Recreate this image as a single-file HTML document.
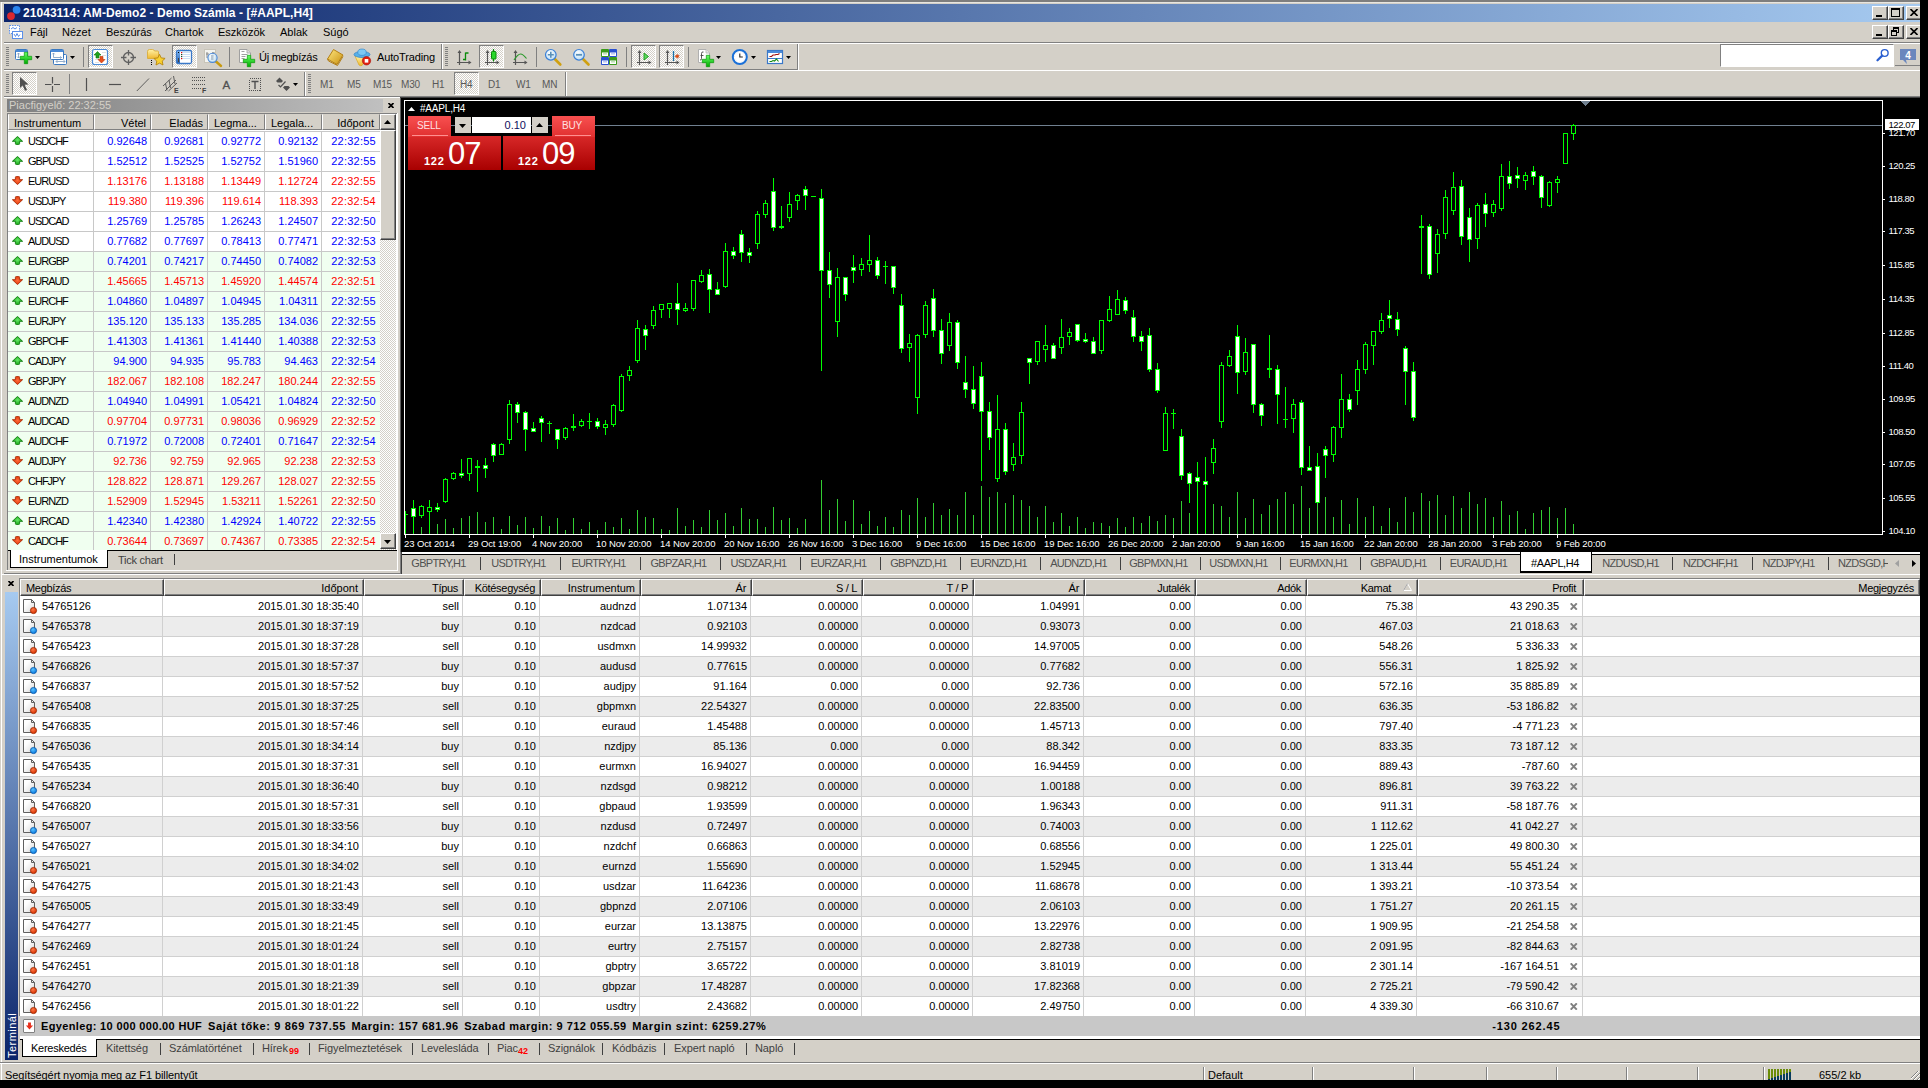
<!DOCTYPE html><html><head><meta charset="utf-8"><title>21043114: AM-Demo2 - Demo Számla - [#AAPL,H4]</title><style>
*{box-sizing:border-box}
html,body{margin:0;padding:0}
body{background:#000;width:1928px;height:1088px;overflow:hidden;position:relative;font:11px "Liberation Sans","DejaVu Sans",sans-serif;color:#000}
#win{position:absolute;left:0;top:0;width:1920px;height:1080px;background:#D4D0C8;overflow:hidden}
.a{position:absolute}
.t{position:absolute;white-space:nowrap;line-height:14px;height:14px}
.r{text-align:right}
.btn{position:absolute;background:#D4D0C8;border:1px solid;border-color:#fff #404040 #404040 #fff;box-shadow:inset -1px -1px 0 #808080}
.sunk{position:absolute;border:1px solid;border-color:#808080 #fff #fff #808080}
.dith{position:absolute;background:repeating-conic-gradient(#fff 0% 25%,#D4D0C8 0% 50%) 0 0/2px 2px;border:1px solid;border-color:#808080 #fff #fff #808080}
.hd{position:absolute;top:0;height:17px;background:#D4D0C8;border:1px solid;border-color:#fff #404040 #404040 #fff;box-shadow:inset -1px -1px 0 #808080;line-height:16px;padding:0 5px;white-space:nowrap;overflow:hidden;letter-spacing:-0.3px}
.hd2{position:absolute;top:0;height:16px;background:#D4D0C8;border:1px solid;border-color:#D4D0C8 #808080 #808080 #fff;line-height:16px;padding:0 4px 0 5px;white-space:nowrap;overflow:hidden}
.sep{position:absolute;width:1px;background:#808080}
.sep2{position:absolute;width:2px;border-left:1px solid #808080;border-right:1px solid #fff}
.grip{position:absolute;width:3px;background:repeating-linear-gradient(#808080 0,#808080 1px,#D4D0C8 1px,#D4D0C8 2px)}
</style></head><body><div id="win">
<div class="a" style="left:0;top:0;width:1920px;height:2px;background:#7e7e7e"></div>
<div class="a" style="left:1px;top:2px;width:1px;height:1078px;background:#fff"></div>
<div class="a" style="left:2px;top:2px;width:1918px;height:1px;background:#e8e6e0"></div>
<div class="a" style="left:4px;top:4px;width:1916px;height:18px;background:linear-gradient(90deg,#0A246A 0%,#A6CAF0 100%)"></div>
<svg class="a" style="left:5px;top:5px" width="17" height="16" viewBox="0 0 17 16"><circle cx="11.6" cy="4.8" r="3.9" fill="#2a85ee"/><circle cx="6" cy="11.1" r="3.9" fill="#d9282f"/></svg>
<div class="t" id="title" style="left:23px;top:5px;height:16px;line-height:16px;font-size:12px;font-weight:bold;color:#fff;letter-spacing:0.05px">21043114: AM-Demo2 - Demo Számla - [#AAPL,H4]</div>
<div class="btn" style="left:1872px;top:6px;width:16px;height:14px"></div>
<div class="a" style="left:1876px;top:15px;width:6px;height:2px;background:#000"></div>
<div class="btn" style="left:1888px;top:6px;width:16px;height:14px"></div>
<div class="a" style="left:1891px;top:8px;width:9px;height:9px;border:1px solid #000;border-top-width:2px"></div>
<div class="btn" style="left:1906px;top:6px;width:16px;height:14px"></div>
<svg class="a" style="left:1910px;top:9px" width="8" height="7" viewBox="0 0 8 7"><path d="M0.5 0L7.5 7M7.5 0L0.5 7" stroke="#000" stroke-width="1.6" fill="none"/></svg>
<div class="btn" style="left:1872px;top:25px;width:16px;height:14px"></div>
<div class="a" style="left:1876px;top:34px;width:6px;height:2px;background:#000"></div>
<div class="btn" style="left:1888px;top:25px;width:16px;height:14px"></div>
<div class="a" style="left:1893px;top:27px;width:6px;height:6px;border:1px solid #000;border-top-width:2px"></div>
<div class="a" style="left:1891px;top:30px;width:6px;height:6px;border:1px solid #000;border-top-width:2px;background:#D4D0C8"></div>
<div class="btn" style="left:1906px;top:25px;width:16px;height:14px"></div>
<svg class="a" style="left:1910px;top:28px" width="8" height="7" viewBox="0 0 8 7"><path d="M0.5 0L7.5 7M7.5 0L0.5 7" stroke="#000" stroke-width="1.6" fill="none"/></svg>
<svg class="a" style="left:8px;top:24px" width="16" height="16" viewBox="0 0 16 16"><rect x="1.5" y="1.5" width="10" height="8" fill="#fff" stroke="#5b8fe8" stroke-dasharray="1.5 1"/><path d="M3 5l2-1.5 2 1.5 2-1.5" stroke="#5b8fe8" fill="none"/><rect x="4.5" y="7.5" width="10" height="7" fill="#fff" stroke="#5b8fe8"/><path d="M6 10l1.5 2.5 1.5-3 1.5 3 1.5-2" stroke="#5b8fe8" fill="none"/></svg>
<div class="t" style="left:30px;top:25px">Fájl</div>
<div class="t" style="left:62px;top:25px">Nézet</div>
<div class="t" style="left:106px;top:25px">Beszúrás</div>
<div class="t" style="left:165px;top:25px">Chartok</div>
<div class="t" style="left:218px;top:25px">Eszközök</div>
<div class="t" style="left:280px;top:25px">Ablak</div>
<div class="t" style="left:323px;top:25px">Súgó</div>
<div class="a" style="left:4px;top:42px;width:1916px;height:1px;background:#808080"></div>
<div class="a" style="left:4px;top:43px;width:1916px;height:1px;background:#fff"></div>
<div class="a" style="left:4px;top:69px;width:794px;height:1px;background:#808080"></div>
<div class="a" style="left:4px;top:70px;width:1916px;height:1px;background:#fff"></div>
<div class="a" style="left:797px;top:44px;width:1px;height:26px;background:#808080"></div>
<div class="a" style="left:798px;top:44px;width:1px;height:27px;background:#fff"></div>
<div class="sep2" style="left:441px;top:44px;height:25px"></div>
<div class="a" style="left:4px;top:96px;width:1916px;height:1px;background:#808080"></div>
<div class="a" style="left:4px;top:97px;width:396px;height:1px;background:#fff"></div>
<div class="a" style="left:400px;top:97px;width:1520px;height:1px;background:#404040"></div>
<div class="sep2" style="left:304px;top:72px;height:24px"></div>
<div class="sep2" style="left:565px;top:72px;height:24px"></div>
<div class="grip" style="left:6px;top:47px;height:20px"></div>
<div class="grip" style="left:445px;top:47px;height:20px"></div>
<div class="grip" style="left:6px;top:74px;height:20px"></div>
<div class="grip" style="left:308px;top:74px;height:20px"></div>
<div class="sep" style="left:83px;top:47px;height:20px"></div>
<div class="sep" style="left:229px;top:47px;height:20px"></div>
<div class="sep" style="left:536px;top:47px;height:20px"></div>
<div class="sep" style="left:626px;top:47px;height:20px"></div>
<div class="sep" style="left:688px;top:47px;height:20px"></div>
<div class="sep" style="left:69px;top:74px;height:20px"></div>
<div class="dith" style="left:88px;top:45px;width:25px;height:23px"></div>
<div class="dith" style="left:172px;top:45px;width:25px;height:23px"></div>
<div class="dith" style="left:479px;top:45px;width:25px;height:23px"></div>
<div class="dith" style="left:631px;top:45px;width:25px;height:23px"></div>
<div class="dith" style="left:659px;top:45px;width:25px;height:23px"></div>
<div class="dith" style="left:12px;top:72px;width:25px;height:23px"></div>
<div class="dith" style="left:454px;top:72px;width:25px;height:23px"></div>
<svg class="a" style="left:35px;top:56px" width="5" height="3" viewBox="0 0 5 3"><path d="M0 0h5L2.5 3z" fill="#000"/></svg>
<svg class="a" style="left:70px;top:56px" width="5" height="3" viewBox="0 0 5 3"><path d="M0 0h5L2.5 3z" fill="#000"/></svg>
<svg class="a" style="left:716px;top:56px" width="5" height="3" viewBox="0 0 5 3"><path d="M0 0h5L2.5 3z" fill="#000"/></svg>
<svg class="a" style="left:751px;top:56px" width="5" height="3" viewBox="0 0 5 3"><path d="M0 0h5L2.5 3z" fill="#000"/></svg>
<svg class="a" style="left:786px;top:56px" width="5" height="3" viewBox="0 0 5 3"><path d="M0 0h5L2.5 3z" fill="#000"/></svg>
<svg class="a" style="left:293px;top:83px" width="5" height="3" viewBox="0 0 5 3"><path d="M0 0h5L2.5 3z" fill="#000"/></svg>
<div class="t" style="left:259px;top:50px;letter-spacing:-0.25px">Új megbízás</div>
<div class="t" style="left:377px;top:50px;letter-spacing:-0.15px">AutoTrading</div>
<div class="t" style="left:320px;top:78px;color:#585858;font-size:10px;letter-spacing:-0.2px">M1</div>
<div class="t" style="left:347px;top:78px;color:#585858;font-size:10px;letter-spacing:-0.2px">M5</div>
<div class="t" style="left:373px;top:78px;color:#585858;font-size:10px;letter-spacing:-0.2px">M15</div>
<div class="t" style="left:401px;top:78px;color:#585858;font-size:10px;letter-spacing:-0.2px">M30</div>
<div class="t" style="left:432px;top:78px;color:#585858;font-size:10px;letter-spacing:-0.2px">H1</div>
<div class="t" style="left:460px;top:78px;color:#585858;font-size:10px;letter-spacing:-0.2px">H4</div>
<div class="t" style="left:488px;top:78px;color:#585858;font-size:10px;letter-spacing:-0.2px">D1</div>
<div class="t" style="left:516px;top:78px;color:#585858;font-size:10px;letter-spacing:-0.2px">W1</div>
<div class="t" style="left:542px;top:78px;color:#585858;font-size:10px;letter-spacing:-0.2px">MN</div>
<div class="a" style="left:1720px;top:44px;width:174px;height:23px;background:#fff;border:1px solid;border-color:#808080 #fff #fff #808080"></div>
<svg class="a" style="left:1876px;top:48px" width="14" height="14" viewBox="0 0 14 14"><circle cx="8.7" cy="5" r="3.4" fill="#fff" stroke="#2a5fd0" stroke-width="1.4"/><path d="M6.2 7.6L1.5 12.3" stroke="#2a5fd0" stroke-width="2.2" stroke-linecap="round"/></svg>
<div class="a" style="left:1895px;top:45px;width:25px;height:21px;border-bottom:1px solid #808080"></div>
<svg class="a" style="left:1899px;top:48px" width="18" height="17" viewBox="0 0 18 17"><path d="M1 1h16v11H7l1 4-4-4H1z" fill="#6a86bd"/><text x="9" y="10.5" font-family="Liberation Sans,sans-serif" font-size="10" font-weight="bold" fill="#fff" text-anchor="middle">4</text></svg>
<svg class="a" style="left:0;top:43px" width="800" height="55" viewBox="0 43 800 55"><defs><linearGradient id="gpl" x1="0" y1="0" x2="0" y2="1"><stop offset="0" stop-color="#6f6"/><stop offset="1" stop-color="#0a0"/></linearGradient><linearGradient id="gbl" x1="0" y1="0" x2="0" y2="1"><stop offset="0" stop-color="#7ab0ea"/><stop offset="1" stop-color="#2a66b8"/></linearGradient><linearGradient id="gyl" x1="0" y1="0" x2="0" y2="1"><stop offset="0" stop-color="#fff2a8"/><stop offset="1" stop-color="#f0b830"/></linearGradient><linearGradient id="ggd" x1="0" y1="0" x2="1" y2="1"><stop offset="0" stop-color="#ffe880"/><stop offset="1" stop-color="#c89010"/></linearGradient><radialGradient id="glens" cx="0.4" cy="0.35" r="0.7"><stop offset="0" stop-color="#fff"/><stop offset="1" stop-color="#b8dcf4"/></radialGradient></defs><rect x="15.5" y="49.5" width="12" height="10" rx="1" fill="#fff" stroke="#3a78c0"/><rect x="16" y="50" width="11" height="2" fill="#4a8ad8"/><path d="M18.5 53v5M17 54.5l1.5-1.5 1.5 1.5M17 56.5l1.5 1.5 1.5-1.5" stroke="#7a9ac0" fill="none" stroke-width="0.8"/><path d="M24.3 52.3h3.4v4h4v3.400h-4v4h-3.400v-4h-4v-3.400h4z" fill="url(#gpl)" stroke="#0a9a0a" stroke-width="0.7"/><rect x="53.5" y="54.5" width="13" height="10" rx="1" fill="#fff" stroke="#3a78c0"/><path d="M56 61.5h9M56 61.5l1.5-1.5M56 61.5l1.5 1.5M65 61.5l-1.5-1.5M65 61.5l-1.5 1.5" stroke="#7a9ac0" fill="none" stroke-width="0.8"/><rect x="50.5" y="49.5" width="13" height="10" rx="1" fill="#fff" stroke="#3a78c0"/><rect x="51" y="50" width="12" height="2" fill="#4a8ad8"/><path d="M53.5 53v4.5h8M52.3 54.3l1.2-1.3 1.2 1.3M60.3 56.3l1.2 1.2-1.2 1.2" stroke="#7a9ac0" fill="none" stroke-width="0.8"/><rect x="92.5" y="49.5" width="15" height="15" rx="2" fill="#fff" stroke="#4a8ad8" stroke-width="1.2"/><path d="M102 52.5h4M102 55.5h4M95 59.5h4M95 62.5h4" stroke="#d8d8d8" stroke-width="0.8"/><path d="M97.5 51.5l3.5 3.5h-2v3h-3v-3h-2z" fill="#1fa01f" stroke="#0c7a0c" stroke-width="0.6"/><path d="M101.500 63l3.500-3.500h-2v-3h-3v3h-2z" fill="#e8501c" stroke="#b83208" stroke-width="0.6"/><circle cx="128.500" cy="57.500" r="5" fill="none" stroke="#606060" stroke-width="1.3"/><path d="M128.500 50v5.500M128.500 59.500v5.500M121 57.500h5.500M130.500 57.500h5.500" stroke="#606060" stroke-width="1.3"/><path d="M147.500 51.500q0-2 2-2h3q1.500 0 2 1.500h3q1 0 1 1v6.500h-11z" fill="url(#gyl)" stroke="#d8a830" stroke-width="0.8"/><path d="M151.500 60v5.500" stroke="#000" stroke-dasharray="1 1"/><path d="M159.500 54.300l1.700 3.600 3.900 0.500-2.900 2.700 0.800 3.900-3.500-1.900-3.500 1.900 0.800-3.900-2.900-2.700 3.900-0.500z" fill="#f8d030" stroke="#b8860b" stroke-width="0.9"/><rect x="176.500" y="50.500" width="15" height="13" rx="1.500" fill="#fff" stroke="#3a78c8" stroke-width="1.300"/><rect x="177" y="51" width="3" height="12" fill="url(#gbl)"/><rect x="178" y="58" width="1" height="4" fill="#444"/><path d="M181 52.500h9M181 54.500h9M181 56.500h9M181 58.500h9" stroke="#b8d0f0" stroke-width="0.7"/><rect x="178" y="52" width="1" height="1" fill="#000"/><rect x="181" y="52" width="1.200" height="1.200" fill="#e00"/><rect x="181" y="54" width="1.200" height="1.200" fill="#242"/><rect x="181" y="56" width="1.200" height="1.200" fill="#242"/><rect x="181" y="58" width="1.200" height="1.200" fill="#e00"/><rect x="204.500" y="49.500" width="11" height="13" fill="#f4f4f0" stroke="#c8c4b8"/><path d="M207 52v6M213 52v5M206 54h3M212 53h3" stroke="#808080" stroke-width="0.9"/><path d="M216 61.500l5 4.500" stroke="#c89a10" stroke-width="2.400" stroke-linecap="round"/><circle cx="212.500" cy="57.800" r="4.600" fill="url(#glens)" fill-opacity="0.850" stroke="#4a88d8" stroke-width="1.100"/><rect x="211" y="55" width="2.500" height="5" fill="#a8b8c8" opacity="0.8"/><path d="M239.500 49.500h7.500l3.500 3.500v9.500h-11z" fill="#fff" stroke="#a0a0a0"/><path d="M247 49.500v3.500h3.500" fill="#e0e0e0" stroke="#a0a0a0" stroke-width="0.8"/><path d="M241.500 51.500h3M241.500 54.500h6M241.500 56.500h4M241.500 58.500h3" stroke="#a0a0a0"/><path d="M247.3 55.3h3.4v4h4v3.400h-4v4h-3.400v-4h-4v-3.400h4z" fill="url(#gpl)" stroke="#0a9a0a" stroke-width="0.7"/><path d="M327.500 59l6-9.500 9.500 5.500-6 9.500z" fill="url(#ggd)" stroke="#b07808" stroke-width="0.9"/><path d="M327.500 59l1 2 9 4.500 5.500-9" fill="none" stroke="#b07808" stroke-width="0.9"/><path d="M355 56l10 0 1 4-4 5.500q-2 0.500-3-0.500z" fill="url(#gyl)" stroke="#d8a820" stroke-width="0.700"/><ellipse cx="362" cy="54.500" rx="8" ry="3" fill="#58b0e8" stroke="#2a80c8" stroke-width="0.700"/><ellipse cx="362" cy="52.200" rx="4.200" ry="3.200" fill="#7cc8f4" stroke="#2a80c8" stroke-width="0.600"/><circle cx="366.500" cy="60.800" r="4.200" fill="#e02010" stroke="#a81008" stroke-width="0.600"/><rect x="364.700" y="59" width="3.600" height="3.600" fill="#fff"/><path d="M459.5 52V65 M457 62.5H470" stroke="#555" stroke-width="1.2" fill="none"/><path d="M459.5 50l2 3h-4z M471.5 62.5l-3 -2v4z" fill="#555"/><path d="M465.500 52.500v8M465.500 53h3M465.500 59.500h-2.500" stroke="#0a8a0a" stroke-width="1.300" fill="none"/><path d="M487.5 52V65 M485 62.5H498" stroke="#555" stroke-width="1.2" fill="none"/><path d="M487.5 50l2 3h-4z M499.5 62.5l-3 -2v4z" fill="#555"/><path d="M493.500 49v12.500" stroke="#0a8a0a" stroke-width="1.200"/><rect x="491.500" y="51.500" width="4.500" height="7.500" rx="0.800" fill="#2ad82a" stroke="#0a8a0a"/><path d="M515.5 52V65 M513 62.5H526" stroke="#555" stroke-width="1.2" fill="none"/><path d="M515.5 50l2 3h-4z M527.5 62.5l-3 -2v4z" fill="#555"/><path d="M514 60q4-6 6.500-6t6 4.500" stroke="#2a9a2a" stroke-width="1.200" fill="none"/><path d="M554.8 59l5.500 5.500" stroke="#d0a010" stroke-width="2.600" stroke-linecap="round"/><circle cx="550.8" cy="54.800" r="5.300" fill="url(#glens)" stroke="#3a80d8" stroke-width="1.200"/><path d="M547.8 54.800h6M550.8 51.800v6" stroke="#5a90b8" stroke-width="1.600"/><path d="M583 59l5.500 5.500" stroke="#d0a010" stroke-width="2.600" stroke-linecap="round"/><circle cx="579" cy="54.800" r="5.300" fill="url(#glens)" stroke="#3a80d8" stroke-width="1.200"/><path d="M576 54.800h6" stroke="#5a90b8" stroke-width="1.800"/><rect x="601" y="49" width="8" height="8" rx="1" fill="#3a9a1a"/><rect x="602" y="52.5" width="6" height="3.500" fill="#fff"/><rect x="603" y="53.5" width="4" height="0.800" fill="#3a9a1a" opacity="0.6"/><rect x="609" y="49" width="8" height="8" rx="1" fill="#2a50d0"/><rect x="610" y="52.5" width="6" height="3.500" fill="#fff"/><rect x="611" y="53.5" width="4" height="0.800" fill="#2a50d0" opacity="0.6"/><rect x="601" y="57" width="8" height="8" rx="1" fill="#2a50d0"/><rect x="602" y="60.5" width="6" height="3.500" fill="#fff"/><rect x="603" y="61.5" width="4" height="0.800" fill="#2a50d0" opacity="0.6"/><rect x="609" y="57" width="8" height="8" rx="1" fill="#3a9a1a"/><rect x="610" y="60.5" width="6" height="3.500" fill="#fff"/><rect x="611" y="61.5" width="4" height="0.800" fill="#3a9a1a" opacity="0.6"/><path d="M639.5 52V65 M637 62.5H650" stroke="#555" stroke-width="1.2" fill="none"/><path d="M639.5 50l2 3h-4z M651.5 62.5l-3 -2v4z" fill="#555"/><path d="M644 53l4.500 3.500-4.500 3.500z" fill="#5ad85a" stroke="#1a9a1a" stroke-width="0.900"/><path d="M667.5 52V65 M665 62.5H678" stroke="#555" stroke-width="1.2" fill="none"/><path d="M667.5 50l2 3h-4z M679.5 62.5l-3 -2v4z" fill="#555"/><path d="M673.500 51v10" stroke="#1a70a8" stroke-width="1.300"/><path d="M675 56.300l2.500-2 0 1.300 1.800-0.300-1.300 1 1.300 1-1.800-0.300 0 1.300z" fill="#e85010" stroke="#c03000" stroke-width="0.4"/><path d="M698.500 49.500h7.500l3.500 3.500v9.500h-11z" fill="#fff" stroke="#b0b0b0"/><path d="M706 49.500v3.500h3.500" fill="#e8e8e8" stroke="#b0b0b0" stroke-width="0.800"/><path d="M703.500 52q-2-0.500-2 1.500v5q0 2-1.500 1.500M700.500 55.500h3" stroke="#444" fill="none" stroke-width="0.9"/><path d="M706.3 55.3h3.4v4h4v3.400h-4v4h-3.400v-4h-4v-3.400h4z" fill="url(#gpl)" stroke="#0a9a0a" stroke-width="0.7"/><circle cx="739.800" cy="57" r="7" fill="#fff" stroke="#1a70d8" stroke-width="2"/><circle cx="739.800" cy="57" r="5.200" fill="none" stroke="#c8d8e8" stroke-width="0.800" stroke-dasharray="0.7 2"/><path d="M739.800 53.500v3.500h3" stroke="#222" fill="none" stroke-width="1.100"/><rect x="767.500" y="50.500" width="15" height="13" fill="#fff" stroke="#3a78c8" stroke-width="1.200"/><rect x="768" y="51" width="14" height="2" fill="#4a8ad8"/><path d="M768 58.500h14" stroke="#3a78c8"/><path d="M769.500 56.500h2l1.500-1.500h2l1-0.500h2l1.500-1" stroke="#a01010" stroke-width="1.100" fill="none"/><path d="M769.500 61.500h2l1.500-1 1.500 0.500 2-2 2 2.500" stroke="#108a10" stroke-width="1.100" fill="none"/><path d="M20 77v11l2.700-2.500 2.300 5.300 2-0.900-2.300-5.200 3.800-0.200z" fill="#505050"/><path d="M45 84.500h6.500M54 84.500h6M52.500 77v6.500M52.500 86v6" stroke="#505050" stroke-width="1.200"/><path d="M86.500 78v13" stroke="#505050" stroke-width="1.200"/><path d="M109 84.500h12" stroke="#505050" stroke-width="1.200"/><path d="M136.800 91L149 78.500" stroke="#505050" stroke-width="0.900"/><path d="M163 86l8.500-8M165 91l11-11M168.500 91l8.500-8M165.500 83.500l1.500 7M169 80l1.500 8M173.500 76l1.500 8" stroke="#505050" stroke-width="0.900" fill="none"/><text x="174" y="93" font-family="Liberation Sans,sans-serif" font-size="7" font-weight="bold" fill="#404040">E</text><path d="M192 77.5h14" stroke="#505050" stroke-dasharray="1 1"/><path d="M192 80.5h14" stroke="#505050" stroke-dasharray="1 1"/><path d="M192 84.5h14" stroke="#505050" stroke-dasharray="1 1"/><path d="M192 88.5h9" stroke="#505050" stroke-dasharray="1 1"/><text x="202" y="93" font-family="Liberation Sans,sans-serif" font-size="7" font-weight="bold" fill="#404040">F</text><text x="222.600" y="89" font-family="Liberation Sans,sans-serif" font-size="11.500" fill="#505050" stroke="#505050" stroke-width="0.300">A</text><rect x="249.500" y="78.500" width="11" height="12" fill="none" stroke="#505050" stroke-dasharray="1 1" shape-rendering="crispEdges"/><path d="M251.500 81.500h7M255 81.500v7.500" stroke="#505050" stroke-width="1.400" fill="none"/><path d="M276 81l3.500-3.500 3.500 3.500-1.500 1.500h-4zM283 87.500l3.500 3.500 3.500-3.500-1.500-1.500h-4z" fill="#505050"/><path d="M278.500 85l2 2 5-5.500" stroke="#505050" stroke-width="1.200" fill="none"/></svg>
<div class="a" id="mw" style="left:4px;top:98px;width:396px;height:476px">
<div class="a" style="left:3px;top:1px;width:376px;height:13px;background:linear-gradient(90deg,#808080,#C0C0C0)"></div>
<div class="t" style="left:5px;top:0px;color:#D4D0C8">Piacfigyelő: 22:32:55</div>
<svg class="a" style="left:384px;top:5px" width="6" height="5" viewBox="0 0 6 5"><path d="M0.500 0L5.500 5M5.500 0L0.500 5" stroke="#000" stroke-width="1.700"/></svg>
<div class="a" style="left:3px;top:15px;width:390px;height:438px;background:#fff;border-left:1px solid #808080;border-top:1px solid #808080"></div>
<div class="a" style="left:3px;top:452px;width:1px;height:20px;background:#808080"></div>
<div class="hd2" style="left:4px;top:16px;width:86px;text-align:left;letter-spacing:0.00px;">Instrumentum</div>
<div class="hd2" style="left:90px;top:16px;width:57px;text-align:right;letter-spacing:0.00px;">Vétel</div>
<div class="hd2" style="left:147px;top:16px;width:57px;text-align:right;letter-spacing:0.00px;">Eladás</div>
<div class="hd2" style="left:204px;top:16px;width:57px;text-align:left;letter-spacing:0.00px;">Legma...</div>
<div class="hd2" style="left:261px;top:16px;width:57px;text-align:left;letter-spacing:0.00px;">Legala...</div>
<div class="hd2" style="left:318px;top:16px;width:58px;text-align:right;letter-spacing:0.00px;padding-right:5px">Időpont</div>
<svg width="0" height="0" style="position:absolute"><defs><radialGradient id="gup" cx="0.5" cy="0.45" r="0.6"><stop offset="0" stop-color="#66e866"/><stop offset="1" stop-color="#0e9a0e"/></radialGradient><radialGradient id="gdn" cx="0.5" cy="0.5" r="0.6"><stop offset="0" stop-color="#ff6a3a"/><stop offset="1" stop-color="#d83000"/></radialGradient></defs></svg>
<div class="a" style="left:4px;top:34px;width:372px;height:20px;background:#fff;border-bottom:1px solid #C8C8C8"></div>
<svg class="a" style="left:8px;top:38px" width="11" height="9" viewBox="0 0 11 9"><path d="M5.500 0.400L10.600 5.300H7.600V7.500Q7.600 8.600 6.500 8.600H4.500Q3.400 8.600 3.400 7.500V5.300H0.400z" fill="url(#gup)" stroke="#0a7a0a" stroke-width="0.900"/></svg>
<div class="t" style="left:24px;top:36px;letter-spacing:-1px">USDCHF</div>
<div class="t r" style="left:89px;width:54px;top:36px;color:#0000FF">0.92648</div>
<div class="t r" style="left:146px;width:54px;top:36px;color:#0000FF">0.92681</div>
<div class="t r" style="left:203px;width:54px;top:36px;color:#0000FF">0.92772</div>
<div class="t r" style="left:260px;width:54px;top:36px;color:#0000FF">0.92132</div>
<div class="t r" style="left:318px;width:54px;top:36px;color:#0000FF;letter-spacing:0.25px;padding-right:0">22:32:55</div>
<div class="a" style="left:4px;top:54px;width:372px;height:20px;background:#fff;border-bottom:1px solid #C8C8C8"></div>
<svg class="a" style="left:8px;top:58px" width="11" height="9" viewBox="0 0 11 9"><path d="M5.500 0.400L10.600 5.300H7.600V7.500Q7.600 8.600 6.500 8.600H4.500Q3.400 8.600 3.400 7.500V5.300H0.400z" fill="url(#gup)" stroke="#0a7a0a" stroke-width="0.900"/></svg>
<div class="t" style="left:24px;top:56px;letter-spacing:-1px">GBPUSD</div>
<div class="t r" style="left:89px;width:54px;top:56px;color:#0000FF">1.52512</div>
<div class="t r" style="left:146px;width:54px;top:56px;color:#0000FF">1.52525</div>
<div class="t r" style="left:203px;width:54px;top:56px;color:#0000FF">1.52752</div>
<div class="t r" style="left:260px;width:54px;top:56px;color:#0000FF">1.51960</div>
<div class="t r" style="left:318px;width:54px;top:56px;color:#0000FF;letter-spacing:0.25px;padding-right:0">22:32:55</div>
<div class="a" style="left:4px;top:74px;width:372px;height:20px;background:#fff;border-bottom:1px solid #C8C8C8"></div>
<svg class="a" style="left:8px;top:78px" width="11" height="9" viewBox="0 0 11 9"><path d="M5.500 8.600L10.600 3.700H7.600V1.500Q7.600 0.400 6.500 0.400H4.500Q3.400 0.400 3.400 1.500V3.700H0.400z" fill="url(#gdn)" stroke="#a82800" stroke-width="0.900"/></svg>
<div class="t" style="left:24px;top:76px;letter-spacing:-1px">EURUSD</div>
<div class="t r" style="left:89px;width:54px;top:76px;color:#FF0000">1.13176</div>
<div class="t r" style="left:146px;width:54px;top:76px;color:#FF0000">1.13188</div>
<div class="t r" style="left:203px;width:54px;top:76px;color:#FF0000">1.13449</div>
<div class="t r" style="left:260px;width:54px;top:76px;color:#FF0000">1.12724</div>
<div class="t r" style="left:318px;width:54px;top:76px;color:#FF0000;letter-spacing:0.25px;padding-right:0">22:32:55</div>
<div class="a" style="left:4px;top:94px;width:372px;height:20px;background:#fff;border-bottom:1px solid #C8C8C8"></div>
<svg class="a" style="left:8px;top:98px" width="11" height="9" viewBox="0 0 11 9"><path d="M5.500 8.600L10.600 3.700H7.600V1.500Q7.600 0.400 6.500 0.400H4.500Q3.400 0.400 3.400 1.500V3.700H0.400z" fill="url(#gdn)" stroke="#a82800" stroke-width="0.900"/></svg>
<div class="t" style="left:24px;top:96px;letter-spacing:-1px">USDJPY</div>
<div class="t r" style="left:89px;width:54px;top:96px;color:#FF0000">119.380</div>
<div class="t r" style="left:146px;width:54px;top:96px;color:#FF0000">119.396</div>
<div class="t r" style="left:203px;width:54px;top:96px;color:#FF0000">119.614</div>
<div class="t r" style="left:260px;width:54px;top:96px;color:#FF0000">118.393</div>
<div class="t r" style="left:318px;width:54px;top:96px;color:#FF0000;letter-spacing:0.25px;padding-right:0">22:32:54</div>
<div class="a" style="left:4px;top:114px;width:372px;height:20px;background:#fff;border-bottom:1px solid #C8C8C8"></div>
<svg class="a" style="left:8px;top:118px" width="11" height="9" viewBox="0 0 11 9"><path d="M5.500 0.400L10.600 5.300H7.600V7.500Q7.600 8.600 6.500 8.600H4.500Q3.400 8.600 3.400 7.500V5.300H0.400z" fill="url(#gup)" stroke="#0a7a0a" stroke-width="0.900"/></svg>
<div class="t" style="left:24px;top:116px;letter-spacing:-1px">USDCAD</div>
<div class="t r" style="left:89px;width:54px;top:116px;color:#0000FF">1.25769</div>
<div class="t r" style="left:146px;width:54px;top:116px;color:#0000FF">1.25785</div>
<div class="t r" style="left:203px;width:54px;top:116px;color:#0000FF">1.26243</div>
<div class="t r" style="left:260px;width:54px;top:116px;color:#0000FF">1.24507</div>
<div class="t r" style="left:318px;width:54px;top:116px;color:#0000FF;letter-spacing:0.25px;padding-right:0">22:32:50</div>
<div class="a" style="left:4px;top:134px;width:372px;height:20px;background:#fff;border-bottom:1px solid #C8C8C8"></div>
<svg class="a" style="left:8px;top:138px" width="11" height="9" viewBox="0 0 11 9"><path d="M5.500 0.400L10.600 5.300H7.600V7.500Q7.600 8.600 6.500 8.600H4.500Q3.400 8.600 3.400 7.500V5.300H0.400z" fill="url(#gup)" stroke="#0a7a0a" stroke-width="0.900"/></svg>
<div class="t" style="left:24px;top:136px;letter-spacing:-1px">AUDUSD</div>
<div class="t r" style="left:89px;width:54px;top:136px;color:#0000FF">0.77682</div>
<div class="t r" style="left:146px;width:54px;top:136px;color:#0000FF">0.77697</div>
<div class="t r" style="left:203px;width:54px;top:136px;color:#0000FF">0.78413</div>
<div class="t r" style="left:260px;width:54px;top:136px;color:#0000FF">0.77471</div>
<div class="t r" style="left:318px;width:54px;top:136px;color:#0000FF;letter-spacing:0.25px;padding-right:0">22:32:53</div>
<div class="a" style="left:4px;top:154px;width:372px;height:20px;background:#F0FFF0;border-bottom:1px solid #C8C8C8"></div>
<svg class="a" style="left:8px;top:158px" width="11" height="9" viewBox="0 0 11 9"><path d="M5.500 0.400L10.600 5.300H7.600V7.500Q7.600 8.600 6.500 8.600H4.500Q3.400 8.600 3.400 7.500V5.300H0.400z" fill="url(#gup)" stroke="#0a7a0a" stroke-width="0.900"/></svg>
<div class="t" style="left:24px;top:156px;letter-spacing:-1px">EURGBP</div>
<div class="t r" style="left:89px;width:54px;top:156px;color:#0000FF">0.74201</div>
<div class="t r" style="left:146px;width:54px;top:156px;color:#0000FF">0.74217</div>
<div class="t r" style="left:203px;width:54px;top:156px;color:#0000FF">0.74450</div>
<div class="t r" style="left:260px;width:54px;top:156px;color:#0000FF">0.74082</div>
<div class="t r" style="left:318px;width:54px;top:156px;color:#0000FF;letter-spacing:0.25px;padding-right:0">22:32:53</div>
<div class="a" style="left:4px;top:174px;width:372px;height:20px;background:#F0FFF0;border-bottom:1px solid #C8C8C8"></div>
<svg class="a" style="left:8px;top:178px" width="11" height="9" viewBox="0 0 11 9"><path d="M5.500 8.600L10.600 3.700H7.600V1.500Q7.600 0.400 6.500 0.400H4.500Q3.400 0.400 3.400 1.500V3.700H0.400z" fill="url(#gdn)" stroke="#a82800" stroke-width="0.900"/></svg>
<div class="t" style="left:24px;top:176px;letter-spacing:-1px">EURAUD</div>
<div class="t r" style="left:89px;width:54px;top:176px;color:#FF0000">1.45665</div>
<div class="t r" style="left:146px;width:54px;top:176px;color:#FF0000">1.45713</div>
<div class="t r" style="left:203px;width:54px;top:176px;color:#FF0000">1.45920</div>
<div class="t r" style="left:260px;width:54px;top:176px;color:#FF0000">1.44574</div>
<div class="t r" style="left:318px;width:54px;top:176px;color:#FF0000;letter-spacing:0.25px;padding-right:0">22:32:51</div>
<div class="a" style="left:4px;top:194px;width:372px;height:20px;background:#F0FFF0;border-bottom:1px solid #C8C8C8"></div>
<svg class="a" style="left:8px;top:198px" width="11" height="9" viewBox="0 0 11 9"><path d="M5.500 0.400L10.600 5.300H7.600V7.500Q7.600 8.600 6.500 8.600H4.500Q3.400 8.600 3.400 7.500V5.300H0.400z" fill="url(#gup)" stroke="#0a7a0a" stroke-width="0.900"/></svg>
<div class="t" style="left:24px;top:196px;letter-spacing:-1px">EURCHF</div>
<div class="t r" style="left:89px;width:54px;top:196px;color:#0000FF">1.04860</div>
<div class="t r" style="left:146px;width:54px;top:196px;color:#0000FF">1.04897</div>
<div class="t r" style="left:203px;width:54px;top:196px;color:#0000FF">1.04945</div>
<div class="t r" style="left:260px;width:54px;top:196px;color:#0000FF">1.04311</div>
<div class="t r" style="left:318px;width:54px;top:196px;color:#0000FF;letter-spacing:0.25px;padding-right:0">22:32:55</div>
<div class="a" style="left:4px;top:214px;width:372px;height:20px;background:#F0FFF0;border-bottom:1px solid #C8C8C8"></div>
<svg class="a" style="left:8px;top:218px" width="11" height="9" viewBox="0 0 11 9"><path d="M5.500 0.400L10.600 5.300H7.600V7.500Q7.600 8.600 6.500 8.600H4.500Q3.400 8.600 3.400 7.500V5.300H0.400z" fill="url(#gup)" stroke="#0a7a0a" stroke-width="0.900"/></svg>
<div class="t" style="left:24px;top:216px;letter-spacing:-1px">EURJPY</div>
<div class="t r" style="left:89px;width:54px;top:216px;color:#0000FF">135.120</div>
<div class="t r" style="left:146px;width:54px;top:216px;color:#0000FF">135.133</div>
<div class="t r" style="left:203px;width:54px;top:216px;color:#0000FF">135.285</div>
<div class="t r" style="left:260px;width:54px;top:216px;color:#0000FF">134.036</div>
<div class="t r" style="left:318px;width:54px;top:216px;color:#0000FF;letter-spacing:0.25px;padding-right:0">22:32:55</div>
<div class="a" style="left:4px;top:234px;width:372px;height:20px;background:#F0FFF0;border-bottom:1px solid #C8C8C8"></div>
<svg class="a" style="left:8px;top:238px" width="11" height="9" viewBox="0 0 11 9"><path d="M5.500 0.400L10.600 5.300H7.600V7.500Q7.600 8.600 6.500 8.600H4.500Q3.400 8.600 3.400 7.500V5.300H0.400z" fill="url(#gup)" stroke="#0a7a0a" stroke-width="0.900"/></svg>
<div class="t" style="left:24px;top:236px;letter-spacing:-1px">GBPCHF</div>
<div class="t r" style="left:89px;width:54px;top:236px;color:#0000FF">1.41303</div>
<div class="t r" style="left:146px;width:54px;top:236px;color:#0000FF">1.41361</div>
<div class="t r" style="left:203px;width:54px;top:236px;color:#0000FF">1.41440</div>
<div class="t r" style="left:260px;width:54px;top:236px;color:#0000FF">1.40388</div>
<div class="t r" style="left:318px;width:54px;top:236px;color:#0000FF;letter-spacing:0.25px;padding-right:0">22:32:53</div>
<div class="a" style="left:4px;top:254px;width:372px;height:20px;background:#F0FFF0;border-bottom:1px solid #C8C8C8"></div>
<svg class="a" style="left:8px;top:258px" width="11" height="9" viewBox="0 0 11 9"><path d="M5.500 0.400L10.600 5.300H7.600V7.500Q7.600 8.600 6.500 8.600H4.500Q3.400 8.600 3.400 7.500V5.300H0.400z" fill="url(#gup)" stroke="#0a7a0a" stroke-width="0.900"/></svg>
<div class="t" style="left:24px;top:256px;letter-spacing:-1px">CADJPY</div>
<div class="t r" style="left:89px;width:54px;top:256px;color:#0000FF">94.900</div>
<div class="t r" style="left:146px;width:54px;top:256px;color:#0000FF">94.935</div>
<div class="t r" style="left:203px;width:54px;top:256px;color:#0000FF">95.783</div>
<div class="t r" style="left:260px;width:54px;top:256px;color:#0000FF">94.463</div>
<div class="t r" style="left:318px;width:54px;top:256px;color:#0000FF;letter-spacing:0.25px;padding-right:0">22:32:54</div>
<div class="a" style="left:4px;top:274px;width:372px;height:20px;background:#F0FFF0;border-bottom:1px solid #C8C8C8"></div>
<svg class="a" style="left:8px;top:278px" width="11" height="9" viewBox="0 0 11 9"><path d="M5.500 8.600L10.600 3.700H7.600V1.500Q7.600 0.400 6.500 0.400H4.500Q3.400 0.400 3.400 1.500V3.700H0.400z" fill="url(#gdn)" stroke="#a82800" stroke-width="0.900"/></svg>
<div class="t" style="left:24px;top:276px;letter-spacing:-1px">GBPJPY</div>
<div class="t r" style="left:89px;width:54px;top:276px;color:#FF0000">182.067</div>
<div class="t r" style="left:146px;width:54px;top:276px;color:#FF0000">182.108</div>
<div class="t r" style="left:203px;width:54px;top:276px;color:#FF0000">182.247</div>
<div class="t r" style="left:260px;width:54px;top:276px;color:#FF0000">180.244</div>
<div class="t r" style="left:318px;width:54px;top:276px;color:#FF0000;letter-spacing:0.25px;padding-right:0">22:32:55</div>
<div class="a" style="left:4px;top:294px;width:372px;height:20px;background:#F0FFF0;border-bottom:1px solid #C8C8C8"></div>
<svg class="a" style="left:8px;top:298px" width="11" height="9" viewBox="0 0 11 9"><path d="M5.500 0.400L10.600 5.300H7.600V7.500Q7.600 8.600 6.500 8.600H4.500Q3.400 8.600 3.400 7.500V5.300H0.400z" fill="url(#gup)" stroke="#0a7a0a" stroke-width="0.900"/></svg>
<div class="t" style="left:24px;top:296px;letter-spacing:-1px">AUDNZD</div>
<div class="t r" style="left:89px;width:54px;top:296px;color:#0000FF">1.04940</div>
<div class="t r" style="left:146px;width:54px;top:296px;color:#0000FF">1.04991</div>
<div class="t r" style="left:203px;width:54px;top:296px;color:#0000FF">1.05421</div>
<div class="t r" style="left:260px;width:54px;top:296px;color:#0000FF">1.04824</div>
<div class="t r" style="left:318px;width:54px;top:296px;color:#0000FF;letter-spacing:0.25px;padding-right:0">22:32:50</div>
<div class="a" style="left:4px;top:314px;width:372px;height:20px;background:#F0FFF0;border-bottom:1px solid #C8C8C8"></div>
<svg class="a" style="left:8px;top:318px" width="11" height="9" viewBox="0 0 11 9"><path d="M5.500 8.600L10.600 3.700H7.600V1.500Q7.600 0.400 6.500 0.400H4.500Q3.400 0.400 3.400 1.500V3.700H0.400z" fill="url(#gdn)" stroke="#a82800" stroke-width="0.900"/></svg>
<div class="t" style="left:24px;top:316px;letter-spacing:-1px">AUDCAD</div>
<div class="t r" style="left:89px;width:54px;top:316px;color:#FF0000">0.97704</div>
<div class="t r" style="left:146px;width:54px;top:316px;color:#FF0000">0.97731</div>
<div class="t r" style="left:203px;width:54px;top:316px;color:#FF0000">0.98036</div>
<div class="t r" style="left:260px;width:54px;top:316px;color:#FF0000">0.96929</div>
<div class="t r" style="left:318px;width:54px;top:316px;color:#FF0000;letter-spacing:0.25px;padding-right:0">22:32:52</div>
<div class="a" style="left:4px;top:334px;width:372px;height:20px;background:#F0FFF0;border-bottom:1px solid #C8C8C8"></div>
<svg class="a" style="left:8px;top:338px" width="11" height="9" viewBox="0 0 11 9"><path d="M5.500 0.400L10.600 5.300H7.600V7.500Q7.600 8.600 6.500 8.600H4.500Q3.400 8.600 3.400 7.500V5.300H0.400z" fill="url(#gup)" stroke="#0a7a0a" stroke-width="0.900"/></svg>
<div class="t" style="left:24px;top:336px;letter-spacing:-1px">AUDCHF</div>
<div class="t r" style="left:89px;width:54px;top:336px;color:#0000FF">0.71972</div>
<div class="t r" style="left:146px;width:54px;top:336px;color:#0000FF">0.72008</div>
<div class="t r" style="left:203px;width:54px;top:336px;color:#0000FF">0.72401</div>
<div class="t r" style="left:260px;width:54px;top:336px;color:#0000FF">0.71647</div>
<div class="t r" style="left:318px;width:54px;top:336px;color:#0000FF;letter-spacing:0.25px;padding-right:0">22:32:54</div>
<div class="a" style="left:4px;top:354px;width:372px;height:20px;background:#F0FFF0;border-bottom:1px solid #C8C8C8"></div>
<svg class="a" style="left:8px;top:358px" width="11" height="9" viewBox="0 0 11 9"><path d="M5.500 8.600L10.600 3.700H7.600V1.500Q7.600 0.400 6.500 0.400H4.500Q3.400 0.400 3.400 1.500V3.700H0.400z" fill="url(#gdn)" stroke="#a82800" stroke-width="0.900"/></svg>
<div class="t" style="left:24px;top:356px;letter-spacing:-1px">AUDJPY</div>
<div class="t r" style="left:89px;width:54px;top:356px;color:#FF0000">92.736</div>
<div class="t r" style="left:146px;width:54px;top:356px;color:#FF0000">92.759</div>
<div class="t r" style="left:203px;width:54px;top:356px;color:#FF0000">92.965</div>
<div class="t r" style="left:260px;width:54px;top:356px;color:#FF0000">92.238</div>
<div class="t r" style="left:318px;width:54px;top:356px;color:#FF0000;letter-spacing:0.25px;padding-right:0">22:32:53</div>
<div class="a" style="left:4px;top:374px;width:372px;height:20px;background:#F0FFF0;border-bottom:1px solid #C8C8C8"></div>
<svg class="a" style="left:8px;top:378px" width="11" height="9" viewBox="0 0 11 9"><path d="M5.500 8.600L10.600 3.700H7.600V1.500Q7.600 0.400 6.500 0.400H4.500Q3.400 0.400 3.400 1.500V3.700H0.400z" fill="url(#gdn)" stroke="#a82800" stroke-width="0.900"/></svg>
<div class="t" style="left:24px;top:376px;letter-spacing:-1px">CHFJPY</div>
<div class="t r" style="left:89px;width:54px;top:376px;color:#FF0000">128.822</div>
<div class="t r" style="left:146px;width:54px;top:376px;color:#FF0000">128.871</div>
<div class="t r" style="left:203px;width:54px;top:376px;color:#FF0000">129.267</div>
<div class="t r" style="left:260px;width:54px;top:376px;color:#FF0000">128.027</div>
<div class="t r" style="left:318px;width:54px;top:376px;color:#FF0000;letter-spacing:0.25px;padding-right:0">22:32:55</div>
<div class="a" style="left:4px;top:394px;width:372px;height:20px;background:#F0FFF0;border-bottom:1px solid #C8C8C8"></div>
<svg class="a" style="left:8px;top:398px" width="11" height="9" viewBox="0 0 11 9"><path d="M5.500 8.600L10.600 3.700H7.600V1.500Q7.600 0.400 6.500 0.400H4.500Q3.400 0.400 3.400 1.500V3.700H0.400z" fill="url(#gdn)" stroke="#a82800" stroke-width="0.900"/></svg>
<div class="t" style="left:24px;top:396px;letter-spacing:-1px">EURNZD</div>
<div class="t r" style="left:89px;width:54px;top:396px;color:#FF0000">1.52909</div>
<div class="t r" style="left:146px;width:54px;top:396px;color:#FF0000">1.52945</div>
<div class="t r" style="left:203px;width:54px;top:396px;color:#FF0000">1.53211</div>
<div class="t r" style="left:260px;width:54px;top:396px;color:#FF0000">1.52261</div>
<div class="t r" style="left:318px;width:54px;top:396px;color:#FF0000;letter-spacing:0.25px;padding-right:0">22:32:50</div>
<div class="a" style="left:4px;top:414px;width:372px;height:20px;background:#F0FFF0;border-bottom:1px solid #C8C8C8"></div>
<svg class="a" style="left:8px;top:418px" width="11" height="9" viewBox="0 0 11 9"><path d="M5.500 0.400L10.600 5.300H7.600V7.500Q7.600 8.600 6.500 8.600H4.500Q3.400 8.600 3.400 7.500V5.300H0.400z" fill="url(#gup)" stroke="#0a7a0a" stroke-width="0.900"/></svg>
<div class="t" style="left:24px;top:416px;letter-spacing:-1px">EURCAD</div>
<div class="t r" style="left:89px;width:54px;top:416px;color:#0000FF">1.42340</div>
<div class="t r" style="left:146px;width:54px;top:416px;color:#0000FF">1.42380</div>
<div class="t r" style="left:203px;width:54px;top:416px;color:#0000FF">1.42924</div>
<div class="t r" style="left:260px;width:54px;top:416px;color:#0000FF">1.40722</div>
<div class="t r" style="left:318px;width:54px;top:416px;color:#0000FF;letter-spacing:0.25px;padding-right:0">22:32:55</div>
<div class="a" style="left:4px;top:434px;width:372px;height:20px;background:#F0FFF0;border-bottom:1px solid #C8C8C8"></div>
<svg class="a" style="left:8px;top:438px" width="11" height="9" viewBox="0 0 11 9"><path d="M5.500 8.600L10.600 3.700H7.600V1.500Q7.600 0.400 6.500 0.400H4.500Q3.400 0.400 3.400 1.500V3.700H0.400z" fill="url(#gdn)" stroke="#a82800" stroke-width="0.900"/></svg>
<div class="t" style="left:24px;top:436px;letter-spacing:-1px">CADCHF</div>
<div class="t r" style="left:89px;width:54px;top:436px;color:#FF0000">0.73644</div>
<div class="t r" style="left:146px;width:54px;top:436px;color:#FF0000">0.73697</div>
<div class="t r" style="left:203px;width:54px;top:436px;color:#FF0000">0.74367</div>
<div class="t r" style="left:260px;width:54px;top:436px;color:#FF0000">0.73385</div>
<div class="t r" style="left:318px;width:54px;top:436px;color:#FF0000;letter-spacing:0.25px;padding-right:0">22:32:54</div>
<div class="a" style="left:4px;top:33px;width:372px;height:1px;background:#C8C8C8"></div>
<div class="a" style="left:89px;top:33px;width:1px;height:421px;background:#C8C8C8"></div>
<div class="a" style="left:146px;top:33px;width:1px;height:421px;background:#C8C8C8"></div>
<div class="a" style="left:203px;top:33px;width:1px;height:421px;background:#C8C8C8"></div>
<div class="a" style="left:260px;top:33px;width:1px;height:421px;background:#C8C8C8"></div>
<div class="a" style="left:317px;top:33px;width:1px;height:421px;background:#C8C8C8"></div>
<div class="a" style="left:376px;top:16px;width:16px;height:436px;background:repeating-conic-gradient(#fff 0% 25%,#D4D0C8 0% 50%) 0 0/2px 2px"></div>
<div class="btn" style="left:376px;top:16px;width:16px;height:16px"></div>
<svg class="a" style="left:380px;top:22px" width="7" height="4" viewBox="0 0 7 4"><path d="M0 4h7L3.5 0z" fill="#000"/></svg>
<div class="btn" style="left:376px;top:32px;width:16px;height:110px"></div>
<div class="btn" style="left:376px;top:435px;width:16px;height:16px"></div>
<svg class="a" style="left:380px;top:442px" width="7" height="4" viewBox="0 0 7 4"><path d="M0 0h7L3.5 4z" fill="#000"/></svg>
<div class="a" style="left:4px;top:452px;width:389px;height:1px;background:#000"></div>
<div class="a" style="left:4px;top:453px;width:389px;height:1px;background:#D4D0C8"></div>
<div class="a" style="left:6px;top:452px;width:98px;height:18px;background:#fff;border:1px solid #000;border-top:none"></div>
<div class="t" style="left:15px;top:454px">Instrumentumok</div>
<div class="t" style="left:114px;top:455px;color:#404040;letter-spacing:-0.25px">Tick chart</div>
<div class="a" style="left:170px;top:456px;width:1px;height:11px;background:#404040"></div>
<div class="a" style="left:2px;top:472px;width:392px;height:1px;background:#fff"></div>
</div>
<div class="a" style="left:397px;top:113px;width:1px;height:458px;background:#fff"></div>
<div class="a" id="chart" style="left:400px;top:98px;width:1520px;height:454px;background:#000"><div class="a" style="left:0;top:0;width:1px;height:454px;background:#606060"></div>
<svg class="a" style="left:0;top:0" width="1520" height="454" viewBox="400 98 1520 454" font-family="Liberation Sans,sans-serif" font-size="9.5" shape-rendering="crispEdges">
<path d="M404.5 535V100.5H1882.5V535M404.5 534.5H1882.5" stroke="#fff" fill="none"/>
<path d="M405 125.5H1882" stroke="#708090" fill="none"/>
<rect x="1883" y="133" width="2" height="1" fill="#fff"/>
<text x="1888.5" y="136" fill="#fff" letter-spacing="-0.45">121.70</text>
<rect x="1883" y="166" width="2" height="1" fill="#fff"/>
<text x="1888.5" y="169" fill="#fff" letter-spacing="-0.45">120.25</text>
<rect x="1883" y="199" width="2" height="1" fill="#fff"/>
<text x="1888.5" y="202" fill="#fff" letter-spacing="-0.45">118.80</text>
<rect x="1883" y="231" width="2" height="1" fill="#fff"/>
<text x="1888.5" y="234" fill="#fff" letter-spacing="-0.45">117.35</text>
<rect x="1883" y="265" width="2" height="1" fill="#fff"/>
<text x="1888.5" y="268" fill="#fff" letter-spacing="-0.45">115.85</text>
<rect x="1883" y="299" width="2" height="1" fill="#fff"/>
<text x="1888.5" y="302" fill="#fff" letter-spacing="-0.45">114.35</text>
<rect x="1883" y="333" width="2" height="1" fill="#fff"/>
<text x="1888.5" y="336" fill="#fff" letter-spacing="-0.45">112.85</text>
<rect x="1883" y="366" width="2" height="1" fill="#fff"/>
<text x="1888.5" y="369" fill="#fff" letter-spacing="-0.45">111.40</text>
<rect x="1883" y="399" width="2" height="1" fill="#fff"/>
<text x="1888.5" y="402" fill="#fff" letter-spacing="-0.45">109.95</text>
<rect x="1883" y="432" width="2" height="1" fill="#fff"/>
<text x="1888.5" y="435" fill="#fff" letter-spacing="-0.45">108.50</text>
<rect x="1883" y="464" width="2" height="1" fill="#fff"/>
<text x="1888.5" y="467" fill="#fff" letter-spacing="-0.45">107.05</text>
<rect x="1883" y="498" width="2" height="1" fill="#fff"/>
<text x="1888.5" y="501" fill="#fff" letter-spacing="-0.45">105.55</text>
<rect x="1883" y="531" width="2" height="1" fill="#fff"/>
<text x="1888.5" y="534" fill="#fff" letter-spacing="-0.45">104.10</text>
<rect x="1885" y="119" width="34" height="11" fill="#fff"/><text x="1888.5" y="128" fill="#000" letter-spacing="-0.45">122.07</text>
<path d="M405.5 535v3" stroke="#fff"/>
<text x="404" y="547.3" fill="#fff" letter-spacing="-0.1">23 Oct 2014</text>
<path d="M469.5 535v3" stroke="#fff"/>
<text x="468" y="547.3" fill="#fff" letter-spacing="-0.1">29 Oct 19:00</text>
<path d="M533.5 535v3" stroke="#fff"/>
<text x="532" y="547.3" fill="#fff" letter-spacing="-0.1">4 Nov 20:00</text>
<path d="M597.5 535v3" stroke="#fff"/>
<text x="596" y="547.3" fill="#fff" letter-spacing="-0.1">10 Nov 20:00</text>
<path d="M661.5 535v3" stroke="#fff"/>
<text x="660" y="547.3" fill="#fff" letter-spacing="-0.1">14 Nov 20:00</text>
<path d="M725.5 535v3" stroke="#fff"/>
<text x="724" y="547.3" fill="#fff" letter-spacing="-0.1">20 Nov 16:00</text>
<path d="M789.5 535v3" stroke="#fff"/>
<text x="788" y="547.3" fill="#fff" letter-spacing="-0.1">26 Nov 16:00</text>
<path d="M853.5 535v3" stroke="#fff"/>
<text x="852" y="547.3" fill="#fff" letter-spacing="-0.1">3 Dec 16:00</text>
<path d="M917.5 535v3" stroke="#fff"/>
<text x="916" y="547.3" fill="#fff" letter-spacing="-0.1">9 Dec 16:00</text>
<path d="M981.5 535v3" stroke="#fff"/>
<text x="980" y="547.3" fill="#fff" letter-spacing="-0.1">15 Dec 16:00</text>
<path d="M1045.5 535v3" stroke="#fff"/>
<text x="1044" y="547.3" fill="#fff" letter-spacing="-0.1">19 Dec 16:00</text>
<path d="M1109.5 535v3" stroke="#fff"/>
<text x="1108" y="547.3" fill="#fff" letter-spacing="-0.1">26 Dec 20:00</text>
<path d="M1173.5 535v3" stroke="#fff"/>
<text x="1172" y="547.3" fill="#fff" letter-spacing="-0.1">2 Jan 20:00</text>
<path d="M1237.5 535v3" stroke="#fff"/>
<text x="1236" y="547.3" fill="#fff" letter-spacing="-0.1">9 Jan 16:00</text>
<path d="M1301.5 535v3" stroke="#fff"/>
<text x="1300" y="547.3" fill="#fff" letter-spacing="-0.1">15 Jan 16:00</text>
<path d="M1365.5 535v3" stroke="#fff"/>
<text x="1364" y="547.3" fill="#fff" letter-spacing="-0.1">22 Jan 20:00</text>
<path d="M1429.5 535v3" stroke="#fff"/>
<text x="1428" y="547.3" fill="#fff" letter-spacing="-0.1">28 Jan 20:00</text>
<path d="M1493.5 535v3" stroke="#fff"/>
<text x="1492" y="547.3" fill="#fff" letter-spacing="-0.1">3 Feb 20:00</text>
<path d="M1557.5 535v3" stroke="#fff"/>
<text x="1556" y="547.3" fill="#fff" letter-spacing="-0.1">9 Feb 20:00</text>
<path d="M1580 101h10l-5 5z" fill="#708090"/>
<rect x="405" y="514" width="1" height="20" fill="#32CD32"/>
<rect x="413" y="516" width="1" height="18" fill="#32CD32"/>
<rect x="421" y="527" width="1" height="7" fill="#32CD32"/>
<rect x="429" y="512" width="1" height="22" fill="#32CD32"/>
<rect x="437" y="524" width="1" height="10" fill="#32CD32"/>
<rect x="445" y="519" width="1" height="15" fill="#32CD32"/>
<rect x="453" y="528" width="1" height="6" fill="#32CD32"/>
<rect x="461" y="518" width="1" height="16" fill="#32CD32"/>
<rect x="469" y="516" width="1" height="18" fill="#32CD32"/>
<rect x="477" y="512" width="1" height="22" fill="#32CD32"/>
<rect x="485" y="522" width="1" height="12" fill="#32CD32"/>
<rect x="493" y="517" width="1" height="17" fill="#32CD32"/>
<rect x="501" y="529" width="1" height="5" fill="#32CD32"/>
<rect x="509" y="516" width="1" height="18" fill="#32CD32"/>
<rect x="517" y="525" width="1" height="9" fill="#32CD32"/>
<rect x="525" y="517" width="1" height="17" fill="#32CD32"/>
<rect x="533" y="528" width="1" height="6" fill="#32CD32"/>
<rect x="541" y="516" width="1" height="18" fill="#32CD32"/>
<rect x="549" y="526" width="1" height="8" fill="#32CD32"/>
<rect x="557" y="518" width="1" height="16" fill="#32CD32"/>
<rect x="565" y="530" width="1" height="4" fill="#32CD32"/>
<rect x="573" y="518" width="1" height="16" fill="#32CD32"/>
<rect x="581" y="529" width="1" height="5" fill="#32CD32"/>
<rect x="589" y="522" width="1" height="12" fill="#32CD32"/>
<rect x="597" y="530" width="1" height="4" fill="#32CD32"/>
<rect x="605" y="522" width="1" height="12" fill="#32CD32"/>
<rect x="613" y="527" width="1" height="7" fill="#32CD32"/>
<rect x="621" y="518" width="1" height="16" fill="#32CD32"/>
<rect x="629" y="529" width="1" height="5" fill="#32CD32"/>
<rect x="637" y="510" width="1" height="24" fill="#32CD32"/>
<rect x="645" y="517" width="1" height="17" fill="#32CD32"/>
<rect x="653" y="518" width="1" height="16" fill="#32CD32"/>
<rect x="661" y="529" width="1" height="5" fill="#32CD32"/>
<rect x="669" y="530" width="1" height="4" fill="#32CD32"/>
<rect x="677" y="508" width="1" height="26" fill="#32CD32"/>
<rect x="685" y="526" width="1" height="8" fill="#32CD32"/>
<rect x="693" y="520" width="1" height="14" fill="#32CD32"/>
<rect x="701" y="527" width="1" height="7" fill="#32CD32"/>
<rect x="709" y="510" width="1" height="24" fill="#32CD32"/>
<rect x="717" y="520" width="1" height="14" fill="#32CD32"/>
<rect x="725" y="513" width="1" height="21" fill="#32CD32"/>
<rect x="733" y="526" width="1" height="8" fill="#32CD32"/>
<rect x="741" y="508" width="1" height="26" fill="#32CD32"/>
<rect x="749" y="519" width="1" height="15" fill="#32CD32"/>
<rect x="757" y="519" width="1" height="15" fill="#32CD32"/>
<rect x="765" y="527" width="1" height="7" fill="#32CD32"/>
<rect x="773" y="507" width="1" height="27" fill="#32CD32"/>
<rect x="781" y="520" width="1" height="14" fill="#32CD32"/>
<rect x="789" y="518" width="1" height="16" fill="#32CD32"/>
<rect x="797" y="528" width="1" height="6" fill="#32CD32"/>
<rect x="805" y="519" width="1" height="15" fill="#32CD32"/>
<rect x="821" y="480" width="1" height="54" fill="#32CD32"/>
<rect x="829" y="510" width="1" height="24" fill="#32CD32"/>
<rect x="837" y="499" width="1" height="35" fill="#32CD32"/>
<rect x="845" y="521" width="1" height="13" fill="#32CD32"/>
<rect x="853" y="500" width="1" height="34" fill="#32CD32"/>
<rect x="861" y="524" width="1" height="10" fill="#32CD32"/>
<rect x="869" y="511" width="1" height="23" fill="#32CD32"/>
<rect x="877" y="526" width="1" height="8" fill="#32CD32"/>
<rect x="885" y="517" width="1" height="17" fill="#32CD32"/>
<rect x="893" y="527" width="1" height="7" fill="#32CD32"/>
<rect x="901" y="510" width="1" height="24" fill="#32CD32"/>
<rect x="909" y="515" width="1" height="19" fill="#32CD32"/>
<rect x="917" y="498" width="1" height="36" fill="#32CD32"/>
<rect x="925" y="517" width="1" height="17" fill="#32CD32"/>
<rect x="933" y="503" width="1" height="31" fill="#32CD32"/>
<rect x="941" y="515" width="1" height="19" fill="#32CD32"/>
<rect x="949" y="509" width="1" height="25" fill="#32CD32"/>
<rect x="957" y="515" width="1" height="19" fill="#32CD32"/>
<rect x="965" y="492" width="1" height="42" fill="#32CD32"/>
<rect x="973" y="515" width="1" height="19" fill="#32CD32"/>
<rect x="981" y="486" width="1" height="48" fill="#32CD32"/>
<rect x="989" y="497" width="1" height="37" fill="#32CD32"/>
<rect x="997" y="492" width="1" height="42" fill="#32CD32"/>
<rect x="1005" y="503" width="1" height="31" fill="#32CD32"/>
<rect x="1013" y="495" width="1" height="39" fill="#32CD32"/>
<rect x="1021" y="500" width="1" height="34" fill="#32CD32"/>
<rect x="1029" y="506" width="1" height="28" fill="#32CD32"/>
<rect x="1037" y="517" width="1" height="17" fill="#32CD32"/>
<rect x="1045" y="506" width="1" height="28" fill="#32CD32"/>
<rect x="1053" y="522" width="1" height="12" fill="#32CD32"/>
<rect x="1061" y="513" width="1" height="21" fill="#32CD32"/>
<rect x="1069" y="526" width="1" height="8" fill="#32CD32"/>
<rect x="1077" y="517" width="1" height="17" fill="#32CD32"/>
<rect x="1085" y="528" width="1" height="6" fill="#32CD32"/>
<rect x="1093" y="522" width="1" height="12" fill="#32CD32"/>
<rect x="1101" y="523" width="1" height="11" fill="#32CD32"/>
<rect x="1109" y="526" width="1" height="8" fill="#32CD32"/>
<rect x="1117" y="518" width="1" height="16" fill="#32CD32"/>
<rect x="1125" y="527" width="1" height="7" fill="#32CD32"/>
<rect x="1133" y="517" width="1" height="17" fill="#32CD32"/>
<rect x="1141" y="523" width="1" height="11" fill="#32CD32"/>
<rect x="1149" y="516" width="1" height="18" fill="#32CD32"/>
<rect x="1157" y="521" width="1" height="13" fill="#32CD32"/>
<rect x="1165" y="515" width="1" height="19" fill="#32CD32"/>
<rect x="1173" y="518" width="1" height="16" fill="#32CD32"/>
<rect x="1181" y="501" width="1" height="33" fill="#32CD32"/>
<rect x="1189" y="513" width="1" height="21" fill="#32CD32"/>
<rect x="1197" y="486" width="1" height="48" fill="#32CD32"/>
<rect x="1205" y="486" width="1" height="48" fill="#32CD32"/>
<rect x="1213" y="504" width="1" height="30" fill="#32CD32"/>
<rect x="1221" y="506" width="1" height="28" fill="#32CD32"/>
<rect x="1229" y="517" width="1" height="17" fill="#32CD32"/>
<rect x="1237" y="492" width="1" height="42" fill="#32CD32"/>
<rect x="1245" y="518" width="1" height="16" fill="#32CD32"/>
<rect x="1253" y="499" width="1" height="35" fill="#32CD32"/>
<rect x="1261" y="514" width="1" height="20" fill="#32CD32"/>
<rect x="1269" y="505" width="1" height="29" fill="#32CD32"/>
<rect x="1277" y="499" width="1" height="35" fill="#32CD32"/>
<rect x="1285" y="492" width="1" height="42" fill="#32CD32"/>
<rect x="1293" y="504" width="1" height="30" fill="#32CD32"/>
<rect x="1301" y="486" width="1" height="48" fill="#32CD32"/>
<rect x="1309" y="508" width="1" height="26" fill="#32CD32"/>
<rect x="1317" y="497" width="1" height="37" fill="#32CD32"/>
<rect x="1325" y="497" width="1" height="37" fill="#32CD32"/>
<rect x="1333" y="517" width="1" height="17" fill="#32CD32"/>
<rect x="1341" y="500" width="1" height="34" fill="#32CD32"/>
<rect x="1349" y="524" width="1" height="10" fill="#32CD32"/>
<rect x="1357" y="498" width="1" height="36" fill="#32CD32"/>
<rect x="1365" y="517" width="1" height="17" fill="#32CD32"/>
<rect x="1373" y="506" width="1" height="28" fill="#32CD32"/>
<rect x="1381" y="526" width="1" height="8" fill="#32CD32"/>
<rect x="1389" y="508" width="1" height="26" fill="#32CD32"/>
<rect x="1397" y="522" width="1" height="12" fill="#32CD32"/>
<rect x="1405" y="497" width="1" height="37" fill="#32CD32"/>
<rect x="1413" y="512" width="1" height="22" fill="#32CD32"/>
<rect x="1421" y="493" width="1" height="41" fill="#32CD32"/>
<rect x="1429" y="501" width="1" height="33" fill="#32CD32"/>
<rect x="1437" y="495" width="1" height="39" fill="#32CD32"/>
<rect x="1445" y="515" width="1" height="19" fill="#32CD32"/>
<rect x="1453" y="496" width="1" height="38" fill="#32CD32"/>
<rect x="1461" y="508" width="1" height="26" fill="#32CD32"/>
<rect x="1469" y="492" width="1" height="42" fill="#32CD32"/>
<rect x="1477" y="504" width="1" height="30" fill="#32CD32"/>
<rect x="1485" y="498" width="1" height="36" fill="#32CD32"/>
<rect x="1493" y="517" width="1" height="17" fill="#32CD32"/>
<rect x="1501" y="501" width="1" height="33" fill="#32CD32"/>
<rect x="1509" y="515" width="1" height="19" fill="#32CD32"/>
<rect x="1517" y="511" width="1" height="23" fill="#32CD32"/>
<rect x="1525" y="529" width="1" height="5" fill="#32CD32"/>
<rect x="1533" y="513" width="1" height="21" fill="#32CD32"/>
<rect x="1541" y="510" width="1" height="24" fill="#32CD32"/>
<rect x="1549" y="507" width="1" height="27" fill="#32CD32"/>
<rect x="1557" y="518" width="1" height="16" fill="#32CD32"/>
<rect x="1565" y="508" width="1" height="26" fill="#32CD32"/>
<rect x="1573" y="524" width="1" height="10" fill="#32CD32"/>
<rect x="405" y="511" width="1" height="22" fill="#00FF00"/>
<rect x="405" y="514" width="3" height="1" fill="#00FF00"/>
<rect x="413" y="500" width="1" height="33" fill="#00FF00"/>
<rect x="411" y="508" width="5" height="9" fill="#00FF00"/>
<rect x="412" y="509" width="3" height="7" fill="#fff"/>
<rect x="421" y="505" width="1" height="13" fill="#00FF00"/>
<rect x="419" y="506" width="5" height="10" fill="#00FF00"/>
<rect x="420" y="507" width="3" height="8" fill="#000"/>
<rect x="429" y="500" width="1" height="33" fill="#00FF00"/>
<rect x="427" y="507" width="5" height="5" fill="#00FF00"/>
<rect x="428" y="508" width="3" height="3" fill="#000"/>
<rect x="437" y="503" width="1" height="9" fill="#00FF00"/>
<rect x="435" y="507" width="5" height="3" fill="#00FF00"/>
<rect x="436" y="508" width="3" height="1" fill="#fff"/>
<rect x="445" y="478" width="1" height="25" fill="#00FF00"/>
<rect x="443" y="479" width="5" height="23" fill="#00FF00"/>
<rect x="444" y="480" width="3" height="21" fill="#000"/>
<rect x="453" y="472" width="1" height="8" fill="#00FF00"/>
<rect x="451" y="473" width="5" height="6" fill="#00FF00"/>
<rect x="452" y="474" width="3" height="4" fill="#000"/>
<rect x="461" y="459" width="1" height="19" fill="#00FF00"/>
<rect x="459" y="473" width="5" height="3" fill="#00FF00"/>
<rect x="460" y="474" width="3" height="1" fill="#fff"/>
<rect x="469" y="458" width="1" height="23" fill="#00FF00"/>
<rect x="467" y="458" width="5" height="16" fill="#00FF00"/>
<rect x="468" y="459" width="3" height="14" fill="#000"/>
<rect x="477" y="460" width="1" height="32" fill="#00FF00"/>
<rect x="475" y="466" width="5" height="2" fill="#00FF00"/>
<rect x="485" y="458" width="1" height="20" fill="#00FF00"/>
<rect x="483" y="465" width="5" height="4" fill="#00FF00"/>
<rect x="484" y="466" width="3" height="2" fill="#fff"/>
<rect x="493" y="443" width="1" height="19" fill="#00FF00"/>
<rect x="491" y="444" width="5" height="12" fill="#00FF00"/>
<rect x="492" y="445" width="3" height="10" fill="#fff"/>
<rect x="501" y="443" width="1" height="12" fill="#00FF00"/>
<rect x="499" y="444" width="5" height="11" fill="#00FF00"/>
<rect x="500" y="445" width="3" height="9" fill="#000"/>
<rect x="509" y="400" width="1" height="44" fill="#00FF00"/>
<rect x="507" y="404" width="5" height="36" fill="#00FF00"/>
<rect x="508" y="405" width="3" height="34" fill="#000"/>
<rect x="517" y="402" width="1" height="21" fill="#00FF00"/>
<rect x="515" y="404" width="5" height="9" fill="#00FF00"/>
<rect x="516" y="405" width="3" height="7" fill="#fff"/>
<rect x="525" y="411" width="1" height="40" fill="#00FF00"/>
<rect x="523" y="412" width="5" height="18" fill="#00FF00"/>
<rect x="524" y="413" width="3" height="16" fill="#fff"/>
<rect x="533" y="422" width="1" height="10" fill="#00FF00"/>
<rect x="531" y="428" width="5" height="4" fill="#00FF00"/>
<rect x="532" y="429" width="3" height="2" fill="#fff"/>
<rect x="541" y="416" width="1" height="26" fill="#00FF00"/>
<rect x="539" y="418" width="5" height="5" fill="#00FF00"/>
<rect x="540" y="419" width="3" height="3" fill="#fff"/>
<rect x="549" y="421" width="1" height="13" fill="#00FF00"/>
<rect x="547" y="423" width="5" height="1" fill="#00FF00"/>
<rect x="557" y="429" width="1" height="20" fill="#00FF00"/>
<rect x="555" y="429" width="5" height="11" fill="#00FF00"/>
<rect x="556" y="430" width="3" height="9" fill="#fff"/>
<rect x="565" y="427" width="1" height="13" fill="#00FF00"/>
<rect x="563" y="428" width="5" height="10" fill="#00FF00"/>
<rect x="564" y="429" width="3" height="8" fill="#000"/>
<rect x="573" y="414" width="1" height="17" fill="#00FF00"/>
<rect x="571" y="426" width="5" height="2" fill="#00FF00"/>
<rect x="581" y="419" width="1" height="8" fill="#00FF00"/>
<rect x="579" y="421" width="5" height="5" fill="#00FF00"/>
<rect x="580" y="422" width="3" height="3" fill="#000"/>
<rect x="589" y="413" width="1" height="16" fill="#00FF00"/>
<rect x="587" y="421" width="5" height="1" fill="#00FF00"/>
<rect x="597" y="418" width="1" height="11" fill="#00FF00"/>
<rect x="595" y="421" width="5" height="6" fill="#00FF00"/>
<rect x="596" y="422" width="3" height="4" fill="#fff"/>
<rect x="605" y="420" width="1" height="15" fill="#00FF00"/>
<rect x="603" y="424" width="5" height="4" fill="#00FF00"/>
<rect x="604" y="425" width="3" height="2" fill="#000"/>
<rect x="613" y="404" width="1" height="23" fill="#00FF00"/>
<rect x="611" y="405" width="5" height="20" fill="#00FF00"/>
<rect x="612" y="406" width="3" height="18" fill="#000"/>
<rect x="621" y="374" width="1" height="38" fill="#00FF00"/>
<rect x="619" y="376" width="5" height="35" fill="#00FF00"/>
<rect x="620" y="377" width="3" height="33" fill="#000"/>
<rect x="629" y="366" width="1" height="15" fill="#00FF00"/>
<rect x="627" y="370" width="5" height="6" fill="#00FF00"/>
<rect x="628" y="371" width="3" height="4" fill="#000"/>
<rect x="637" y="320" width="1" height="43" fill="#00FF00"/>
<rect x="635" y="328" width="5" height="33" fill="#00FF00"/>
<rect x="636" y="329" width="3" height="31" fill="#000"/>
<rect x="645" y="325" width="1" height="25" fill="#00FF00"/>
<rect x="643" y="329" width="5" height="7" fill="#00FF00"/>
<rect x="644" y="330" width="3" height="5" fill="#fff"/>
<rect x="653" y="306" width="1" height="23" fill="#00FF00"/>
<rect x="651" y="310" width="5" height="16" fill="#00FF00"/>
<rect x="652" y="311" width="3" height="14" fill="#000"/>
<rect x="661" y="304" width="1" height="14" fill="#00FF00"/>
<rect x="659" y="304" width="5" height="6" fill="#00FF00"/>
<rect x="660" y="305" width="3" height="4" fill="#000"/>
<rect x="669" y="303" width="1" height="15" fill="#00FF00"/>
<rect x="667" y="303" width="5" height="6" fill="#00FF00"/>
<rect x="668" y="304" width="3" height="4" fill="#000"/>
<rect x="677" y="283" width="1" height="42" fill="#00FF00"/>
<rect x="675" y="303" width="5" height="7" fill="#00FF00"/>
<rect x="676" y="304" width="3" height="5" fill="#fff"/>
<rect x="685" y="303" width="1" height="9" fill="#00FF00"/>
<rect x="683" y="308" width="5" height="3" fill="#00FF00"/>
<rect x="684" y="309" width="3" height="1" fill="#000"/>
<rect x="693" y="280" width="1" height="31" fill="#00FF00"/>
<rect x="691" y="280" width="5" height="29" fill="#00FF00"/>
<rect x="692" y="281" width="3" height="27" fill="#000"/>
<rect x="701" y="270" width="1" height="13" fill="#00FF00"/>
<rect x="699" y="275" width="5" height="7" fill="#00FF00"/>
<rect x="700" y="276" width="3" height="5" fill="#000"/>
<rect x="709" y="269" width="1" height="44" fill="#00FF00"/>
<rect x="707" y="274" width="5" height="16" fill="#00FF00"/>
<rect x="708" y="275" width="3" height="14" fill="#fff"/>
<rect x="717" y="282" width="1" height="13" fill="#00FF00"/>
<rect x="715" y="289" width="5" height="6" fill="#00FF00"/>
<rect x="716" y="290" width="3" height="4" fill="#fff"/>
<rect x="725" y="243" width="1" height="45" fill="#00FF00"/>
<rect x="723" y="251" width="5" height="36" fill="#00FF00"/>
<rect x="724" y="252" width="3" height="34" fill="#000"/>
<rect x="733" y="247" width="1" height="12" fill="#00FF00"/>
<rect x="731" y="251" width="5" height="5" fill="#00FF00"/>
<rect x="732" y="252" width="3" height="3" fill="#fff"/>
<rect x="741" y="230" width="1" height="32" fill="#00FF00"/>
<rect x="739" y="234" width="5" height="19" fill="#00FF00"/>
<rect x="740" y="235" width="3" height="17" fill="#fff"/>
<rect x="749" y="248" width="1" height="15" fill="#00FF00"/>
<rect x="747" y="252" width="5" height="4" fill="#00FF00"/>
<rect x="748" y="253" width="3" height="2" fill="#fff"/>
<rect x="757" y="211" width="1" height="38" fill="#00FF00"/>
<rect x="755" y="214" width="5" height="30" fill="#00FF00"/>
<rect x="756" y="215" width="3" height="28" fill="#000"/>
<rect x="765" y="200" width="1" height="18" fill="#00FF00"/>
<rect x="763" y="203" width="5" height="12" fill="#00FF00"/>
<rect x="764" y="204" width="3" height="10" fill="#000"/>
<rect x="773" y="178" width="1" height="53" fill="#00FF00"/>
<rect x="771" y="191" width="5" height="37" fill="#00FF00"/>
<rect x="772" y="192" width="3" height="35" fill="#fff"/>
<rect x="781" y="206" width="1" height="23" fill="#00FF00"/>
<rect x="779" y="226" width="5" height="2" fill="#00FF00"/>
<rect x="789" y="192" width="1" height="30" fill="#00FF00"/>
<rect x="787" y="204" width="5" height="14" fill="#00FF00"/>
<rect x="788" y="205" width="3" height="12" fill="#000"/>
<rect x="797" y="194" width="1" height="16" fill="#00FF00"/>
<rect x="795" y="195" width="5" height="6" fill="#00FF00"/>
<rect x="796" y="196" width="3" height="4" fill="#000"/>
<rect x="805" y="186" width="1" height="24" fill="#00FF00"/>
<rect x="803" y="189" width="5" height="7" fill="#00FF00"/>
<rect x="804" y="190" width="3" height="5" fill="#fff"/>
<rect x="813" y="196" width="1" height="1" fill="#00FF00"/>
<rect x="811" y="196" width="5" height="1" fill="#00FF00"/>
<rect x="821" y="189" width="1" height="182" fill="#00FF00"/>
<rect x="819" y="198" width="5" height="73" fill="#00FF00"/>
<rect x="820" y="199" width="3" height="71" fill="#fff"/>
<rect x="829" y="252" width="1" height="46" fill="#00FF00"/>
<rect x="827" y="270" width="5" height="15" fill="#00FF00"/>
<rect x="828" y="271" width="3" height="13" fill="#fff"/>
<rect x="837" y="268" width="1" height="69" fill="#00FF00"/>
<rect x="835" y="277" width="5" height="45" fill="#00FF00"/>
<rect x="836" y="278" width="3" height="43" fill="#000"/>
<rect x="845" y="277" width="1" height="24" fill="#00FF00"/>
<rect x="843" y="277" width="5" height="18" fill="#00FF00"/>
<rect x="844" y="278" width="3" height="16" fill="#fff"/>
<rect x="853" y="255" width="1" height="28" fill="#00FF00"/>
<rect x="851" y="267" width="5" height="4" fill="#00FF00"/>
<rect x="852" y="268" width="3" height="2" fill="#fff"/>
<rect x="861" y="258" width="1" height="18" fill="#00FF00"/>
<rect x="859" y="264" width="5" height="6" fill="#00FF00"/>
<rect x="860" y="265" width="3" height="4" fill="#000"/>
<rect x="869" y="235" width="1" height="37" fill="#00FF00"/>
<rect x="867" y="260" width="5" height="5" fill="#00FF00"/>
<rect x="868" y="261" width="3" height="3" fill="#000"/>
<rect x="877" y="257" width="1" height="22" fill="#00FF00"/>
<rect x="875" y="260" width="5" height="16" fill="#00FF00"/>
<rect x="876" y="261" width="3" height="14" fill="#fff"/>
<rect x="885" y="261" width="1" height="23" fill="#00FF00"/>
<rect x="883" y="266" width="5" height="1" fill="#00FF00"/>
<rect x="893" y="266" width="1" height="28" fill="#00FF00"/>
<rect x="891" y="266" width="5" height="22" fill="#00FF00"/>
<rect x="892" y="267" width="3" height="20" fill="#fff"/>
<rect x="901" y="294" width="1" height="59" fill="#00FF00"/>
<rect x="899" y="305" width="5" height="44" fill="#00FF00"/>
<rect x="900" y="306" width="3" height="42" fill="#fff"/>
<rect x="909" y="334" width="1" height="28" fill="#00FF00"/>
<rect x="907" y="343" width="5" height="5" fill="#00FF00"/>
<rect x="908" y="344" width="3" height="3" fill="#000"/>
<rect x="917" y="334" width="1" height="80" fill="#00FF00"/>
<rect x="915" y="335" width="5" height="63" fill="#00FF00"/>
<rect x="916" y="336" width="3" height="61" fill="#000"/>
<rect x="925" y="301" width="1" height="37" fill="#00FF00"/>
<rect x="923" y="305" width="5" height="30" fill="#00FF00"/>
<rect x="924" y="306" width="3" height="28" fill="#000"/>
<rect x="933" y="289" width="1" height="48" fill="#00FF00"/>
<rect x="931" y="298" width="5" height="33" fill="#00FF00"/>
<rect x="932" y="299" width="3" height="31" fill="#fff"/>
<rect x="941" y="319" width="1" height="45" fill="#00FF00"/>
<rect x="939" y="330" width="5" height="24" fill="#00FF00"/>
<rect x="940" y="331" width="3" height="22" fill="#fff"/>
<rect x="949" y="313" width="1" height="38" fill="#00FF00"/>
<rect x="947" y="322" width="5" height="24" fill="#00FF00"/>
<rect x="948" y="323" width="3" height="22" fill="#000"/>
<rect x="957" y="320" width="1" height="49" fill="#00FF00"/>
<rect x="955" y="322" width="5" height="41" fill="#00FF00"/>
<rect x="956" y="323" width="3" height="39" fill="#fff"/>
<rect x="965" y="356" width="1" height="42" fill="#00FF00"/>
<rect x="963" y="382" width="5" height="8" fill="#00FF00"/>
<rect x="964" y="383" width="3" height="6" fill="#fff"/>
<rect x="973" y="366" width="1" height="43" fill="#00FF00"/>
<rect x="971" y="389" width="5" height="15" fill="#00FF00"/>
<rect x="972" y="390" width="3" height="13" fill="#fff"/>
<rect x="981" y="362" width="1" height="119" fill="#00FF00"/>
<rect x="979" y="376" width="5" height="36" fill="#00FF00"/>
<rect x="980" y="377" width="3" height="34" fill="#fff"/>
<rect x="989" y="402" width="1" height="48" fill="#00FF00"/>
<rect x="987" y="411" width="5" height="27" fill="#00FF00"/>
<rect x="988" y="412" width="3" height="25" fill="#fff"/>
<rect x="997" y="395" width="1" height="87" fill="#00FF00"/>
<rect x="995" y="429" width="5" height="50" fill="#00FF00"/>
<rect x="996" y="430" width="3" height="48" fill="#000"/>
<rect x="1005" y="423" width="1" height="52" fill="#00FF00"/>
<rect x="1003" y="429" width="5" height="43" fill="#00FF00"/>
<rect x="1004" y="430" width="3" height="41" fill="#fff"/>
<rect x="1013" y="443" width="1" height="28" fill="#00FF00"/>
<rect x="1011" y="457" width="5" height="8" fill="#00FF00"/>
<rect x="1012" y="458" width="3" height="6" fill="#000"/>
<rect x="1021" y="402" width="1" height="62" fill="#00FF00"/>
<rect x="1019" y="412" width="5" height="44" fill="#00FF00"/>
<rect x="1020" y="413" width="3" height="42" fill="#000"/>
<rect x="1029" y="358" width="1" height="26" fill="#00FF00"/>
<rect x="1027" y="358" width="5" height="5" fill="#00FF00"/>
<rect x="1028" y="359" width="3" height="3" fill="#fff"/>
<rect x="1037" y="341" width="1" height="24" fill="#00FF00"/>
<rect x="1035" y="341" width="5" height="21" fill="#00FF00"/>
<rect x="1036" y="342" width="3" height="19" fill="#000"/>
<rect x="1045" y="325" width="1" height="37" fill="#00FF00"/>
<rect x="1043" y="345" width="5" height="5" fill="#00FF00"/>
<rect x="1044" y="346" width="3" height="3" fill="#000"/>
<rect x="1053" y="343" width="1" height="15" fill="#00FF00"/>
<rect x="1051" y="345" width="5" height="14" fill="#00FF00"/>
<rect x="1052" y="346" width="3" height="12" fill="#fff"/>
<rect x="1061" y="319" width="1" height="35" fill="#00FF00"/>
<rect x="1059" y="337" width="5" height="11" fill="#00FF00"/>
<rect x="1060" y="338" width="3" height="9" fill="#000"/>
<rect x="1069" y="328" width="1" height="17" fill="#00FF00"/>
<rect x="1067" y="332" width="5" height="5" fill="#00FF00"/>
<rect x="1068" y="333" width="3" height="3" fill="#000"/>
<rect x="1077" y="324" width="1" height="18" fill="#00FF00"/>
<rect x="1075" y="324" width="5" height="17" fill="#00FF00"/>
<rect x="1076" y="325" width="3" height="15" fill="#fff"/>
<rect x="1085" y="333" width="1" height="10" fill="#00FF00"/>
<rect x="1083" y="339" width="5" height="3" fill="#00FF00"/>
<rect x="1084" y="340" width="3" height="1" fill="#fff"/>
<rect x="1093" y="337" width="1" height="16" fill="#00FF00"/>
<rect x="1091" y="341" width="5" height="13" fill="#00FF00"/>
<rect x="1092" y="342" width="3" height="11" fill="#fff"/>
<rect x="1101" y="320" width="1" height="34" fill="#00FF00"/>
<rect x="1099" y="320" width="5" height="31" fill="#00FF00"/>
<rect x="1100" y="321" width="3" height="29" fill="#000"/>
<rect x="1109" y="296" width="1" height="26" fill="#00FF00"/>
<rect x="1107" y="309" width="5" height="12" fill="#00FF00"/>
<rect x="1108" y="310" width="3" height="10" fill="#000"/>
<rect x="1117" y="290" width="1" height="25" fill="#00FF00"/>
<rect x="1115" y="299" width="5" height="16" fill="#00FF00"/>
<rect x="1116" y="300" width="3" height="14" fill="#000"/>
<rect x="1125" y="297" width="1" height="17" fill="#00FF00"/>
<rect x="1123" y="300" width="5" height="11" fill="#00FF00"/>
<rect x="1124" y="301" width="3" height="9" fill="#fff"/>
<rect x="1133" y="310" width="1" height="32" fill="#00FF00"/>
<rect x="1131" y="317" width="5" height="20" fill="#00FF00"/>
<rect x="1132" y="318" width="3" height="18" fill="#fff"/>
<rect x="1141" y="331" width="1" height="20" fill="#00FF00"/>
<rect x="1139" y="336" width="5" height="6" fill="#00FF00"/>
<rect x="1140" y="337" width="3" height="4" fill="#fff"/>
<rect x="1149" y="328" width="1" height="44" fill="#00FF00"/>
<rect x="1147" y="335" width="5" height="35" fill="#00FF00"/>
<rect x="1148" y="336" width="3" height="33" fill="#fff"/>
<rect x="1157" y="363" width="1" height="30" fill="#00FF00"/>
<rect x="1155" y="369" width="5" height="22" fill="#00FF00"/>
<rect x="1156" y="370" width="3" height="20" fill="#fff"/>
<rect x="1165" y="407" width="1" height="44" fill="#00FF00"/>
<rect x="1163" y="413" width="5" height="38" fill="#00FF00"/>
<rect x="1164" y="414" width="3" height="36" fill="#000"/>
<rect x="1173" y="409" width="1" height="20" fill="#00FF00"/>
<rect x="1171" y="413" width="5" height="1" fill="#00FF00"/>
<rect x="1181" y="429" width="1" height="51" fill="#00FF00"/>
<rect x="1179" y="436" width="5" height="40" fill="#00FF00"/>
<rect x="1180" y="437" width="3" height="38" fill="#fff"/>
<rect x="1189" y="472" width="1" height="31" fill="#00FF00"/>
<rect x="1187" y="473" width="5" height="11" fill="#00FF00"/>
<rect x="1188" y="474" width="3" height="9" fill="#fff"/>
<rect x="1197" y="462" width="1" height="71" fill="#00FF00"/>
<rect x="1195" y="477" width="5" height="5" fill="#00FF00"/>
<rect x="1196" y="478" width="3" height="3" fill="#fff"/>
<rect x="1205" y="457" width="1" height="76" fill="#00FF00"/>
<rect x="1203" y="481" width="5" height="4" fill="#00FF00"/>
<rect x="1204" y="482" width="3" height="2" fill="#fff"/>
<rect x="1213" y="439" width="1" height="35" fill="#00FF00"/>
<rect x="1211" y="448" width="5" height="15" fill="#00FF00"/>
<rect x="1212" y="449" width="3" height="13" fill="#000"/>
<rect x="1221" y="362" width="1" height="66" fill="#00FF00"/>
<rect x="1219" y="365" width="5" height="57" fill="#00FF00"/>
<rect x="1220" y="366" width="3" height="55" fill="#000"/>
<rect x="1229" y="350" width="1" height="17" fill="#00FF00"/>
<rect x="1227" y="356" width="5" height="10" fill="#00FF00"/>
<rect x="1228" y="357" width="3" height="8" fill="#000"/>
<rect x="1237" y="325" width="1" height="69" fill="#00FF00"/>
<rect x="1235" y="336" width="5" height="37" fill="#00FF00"/>
<rect x="1236" y="337" width="3" height="35" fill="#fff"/>
<rect x="1245" y="338" width="1" height="37" fill="#00FF00"/>
<rect x="1243" y="352" width="5" height="20" fill="#00FF00"/>
<rect x="1244" y="353" width="3" height="18" fill="#000"/>
<rect x="1253" y="344" width="1" height="69" fill="#00FF00"/>
<rect x="1251" y="344" width="5" height="61" fill="#00FF00"/>
<rect x="1252" y="345" width="3" height="59" fill="#fff"/>
<rect x="1261" y="403" width="1" height="23" fill="#00FF00"/>
<rect x="1259" y="404" width="5" height="12" fill="#00FF00"/>
<rect x="1260" y="405" width="3" height="10" fill="#fff"/>
<rect x="1269" y="335" width="1" height="43" fill="#00FF00"/>
<rect x="1267" y="368" width="5" height="2" fill="#00FF00"/>
<rect x="1277" y="365" width="1" height="59" fill="#00FF00"/>
<rect x="1275" y="369" width="5" height="26" fill="#00FF00"/>
<rect x="1276" y="370" width="3" height="24" fill="#fff"/>
<rect x="1285" y="387" width="1" height="41" fill="#00FF00"/>
<rect x="1283" y="419" width="5" height="1" fill="#00FF00"/>
<rect x="1293" y="399" width="1" height="34" fill="#00FF00"/>
<rect x="1291" y="404" width="5" height="15" fill="#00FF00"/>
<rect x="1292" y="405" width="3" height="13" fill="#000"/>
<rect x="1301" y="400" width="1" height="75" fill="#00FF00"/>
<rect x="1299" y="402" width="5" height="66" fill="#00FF00"/>
<rect x="1300" y="403" width="3" height="64" fill="#fff"/>
<rect x="1309" y="446" width="1" height="25" fill="#00FF00"/>
<rect x="1307" y="467" width="5" height="4" fill="#00FF00"/>
<rect x="1308" y="468" width="3" height="2" fill="#fff"/>
<rect x="1317" y="453" width="1" height="50" fill="#00FF00"/>
<rect x="1315" y="466" width="5" height="37" fill="#00FF00"/>
<rect x="1316" y="467" width="3" height="35" fill="#fff"/>
<rect x="1325" y="446" width="1" height="32" fill="#00FF00"/>
<rect x="1323" y="449" width="5" height="7" fill="#00FF00"/>
<rect x="1324" y="450" width="3" height="5" fill="#fff"/>
<rect x="1333" y="426" width="1" height="36" fill="#00FF00"/>
<rect x="1331" y="427" width="5" height="28" fill="#00FF00"/>
<rect x="1332" y="428" width="3" height="26" fill="#000"/>
<rect x="1341" y="374" width="1" height="64" fill="#00FF00"/>
<rect x="1339" y="399" width="5" height="29" fill="#00FF00"/>
<rect x="1340" y="400" width="3" height="27" fill="#000"/>
<rect x="1349" y="394" width="1" height="18" fill="#00FF00"/>
<rect x="1347" y="399" width="5" height="11" fill="#00FF00"/>
<rect x="1348" y="400" width="3" height="9" fill="#fff"/>
<rect x="1357" y="360" width="1" height="45" fill="#00FF00"/>
<rect x="1355" y="369" width="5" height="22" fill="#00FF00"/>
<rect x="1356" y="370" width="3" height="20" fill="#000"/>
<rect x="1365" y="342" width="1" height="32" fill="#00FF00"/>
<rect x="1363" y="344" width="5" height="26" fill="#00FF00"/>
<rect x="1364" y="345" width="3" height="24" fill="#000"/>
<rect x="1373" y="331" width="1" height="34" fill="#00FF00"/>
<rect x="1371" y="331" width="5" height="15" fill="#00FF00"/>
<rect x="1372" y="332" width="3" height="13" fill="#000"/>
<rect x="1381" y="313" width="1" height="21" fill="#00FF00"/>
<rect x="1379" y="320" width="5" height="12" fill="#00FF00"/>
<rect x="1380" y="321" width="3" height="10" fill="#000"/>
<rect x="1389" y="300" width="1" height="28" fill="#00FF00"/>
<rect x="1387" y="315" width="5" height="4" fill="#00FF00"/>
<rect x="1388" y="316" width="3" height="2" fill="#fff"/>
<rect x="1397" y="312" width="1" height="24" fill="#00FF00"/>
<rect x="1395" y="319" width="5" height="11" fill="#00FF00"/>
<rect x="1396" y="320" width="3" height="9" fill="#fff"/>
<rect x="1405" y="346" width="1" height="59" fill="#00FF00"/>
<rect x="1403" y="348" width="5" height="24" fill="#00FF00"/>
<rect x="1404" y="349" width="3" height="22" fill="#fff"/>
<rect x="1413" y="362" width="1" height="59" fill="#00FF00"/>
<rect x="1411" y="371" width="5" height="47" fill="#00FF00"/>
<rect x="1412" y="372" width="3" height="45" fill="#fff"/>
<rect x="1421" y="215" width="1" height="59" fill="#00FF00"/>
<rect x="1419" y="226" width="5" height="2" fill="#00FF00"/>
<rect x="1429" y="224" width="1" height="55" fill="#00FF00"/>
<rect x="1427" y="226" width="5" height="49" fill="#00FF00"/>
<rect x="1428" y="227" width="3" height="47" fill="#fff"/>
<rect x="1437" y="229" width="1" height="44" fill="#00FF00"/>
<rect x="1435" y="234" width="5" height="20" fill="#00FF00"/>
<rect x="1436" y="235" width="3" height="18" fill="#000"/>
<rect x="1445" y="190" width="1" height="49" fill="#00FF00"/>
<rect x="1443" y="197" width="5" height="37" fill="#00FF00"/>
<rect x="1444" y="198" width="3" height="35" fill="#000"/>
<rect x="1453" y="172" width="1" height="43" fill="#00FF00"/>
<rect x="1451" y="187" width="5" height="24" fill="#00FF00"/>
<rect x="1452" y="188" width="3" height="22" fill="#000"/>
<rect x="1461" y="180" width="1" height="65" fill="#00FF00"/>
<rect x="1459" y="186" width="5" height="51" fill="#00FF00"/>
<rect x="1460" y="187" width="3" height="49" fill="#fff"/>
<rect x="1469" y="208" width="1" height="54" fill="#00FF00"/>
<rect x="1467" y="217" width="5" height="23" fill="#00FF00"/>
<rect x="1468" y="218" width="3" height="21" fill="#fff"/>
<rect x="1477" y="203" width="1" height="46" fill="#00FF00"/>
<rect x="1475" y="205" width="5" height="34" fill="#00FF00"/>
<rect x="1476" y="206" width="3" height="32" fill="#000"/>
<rect x="1485" y="193" width="1" height="34" fill="#00FF00"/>
<rect x="1483" y="204" width="5" height="10" fill="#00FF00"/>
<rect x="1484" y="205" width="3" height="8" fill="#fff"/>
<rect x="1493" y="200" width="1" height="17" fill="#00FF00"/>
<rect x="1491" y="204" width="5" height="9" fill="#00FF00"/>
<rect x="1492" y="205" width="3" height="7" fill="#000"/>
<rect x="1501" y="164" width="1" height="47" fill="#00FF00"/>
<rect x="1499" y="176" width="5" height="33" fill="#00FF00"/>
<rect x="1500" y="177" width="3" height="31" fill="#000"/>
<rect x="1509" y="161" width="1" height="28" fill="#00FF00"/>
<rect x="1507" y="176" width="5" height="8" fill="#00FF00"/>
<rect x="1508" y="177" width="3" height="6" fill="#fff"/>
<rect x="1517" y="167" width="1" height="21" fill="#00FF00"/>
<rect x="1515" y="175" width="5" height="4" fill="#00FF00"/>
<rect x="1516" y="176" width="3" height="2" fill="#fff"/>
<rect x="1525" y="172" width="1" height="18" fill="#00FF00"/>
<rect x="1523" y="175" width="5" height="6" fill="#00FF00"/>
<rect x="1524" y="176" width="3" height="4" fill="#000"/>
<rect x="1533" y="166" width="1" height="19" fill="#00FF00"/>
<rect x="1531" y="171" width="5" height="6" fill="#00FF00"/>
<rect x="1532" y="172" width="3" height="4" fill="#fff"/>
<rect x="1541" y="175" width="1" height="33" fill="#00FF00"/>
<rect x="1539" y="176" width="5" height="22" fill="#00FF00"/>
<rect x="1540" y="177" width="3" height="20" fill="#fff"/>
<rect x="1549" y="181" width="1" height="26" fill="#00FF00"/>
<rect x="1547" y="182" width="5" height="24" fill="#00FF00"/>
<rect x="1548" y="183" width="3" height="22" fill="#000"/>
<rect x="1557" y="176" width="1" height="17" fill="#00FF00"/>
<rect x="1555" y="179" width="5" height="4" fill="#00FF00"/>
<rect x="1556" y="180" width="3" height="2" fill="#000"/>
<rect x="1565" y="133" width="1" height="31" fill="#00FF00"/>
<rect x="1563" y="133" width="5" height="31" fill="#00FF00"/>
<rect x="1564" y="134" width="3" height="29" fill="#000"/>
<rect x="1573" y="124" width="1" height="16" fill="#00FF00"/>
<rect x="1571" y="125" width="5" height="9" fill="#00FF00"/>
<rect x="1572" y="126" width="3" height="7" fill="#000"/>
</svg>
<svg class="a" style="left:8px;top:9px" width="7" height="4" viewBox="0 0 7 4"><path d="M0 4h7L3.500 0z" fill="#fff"/></svg>
<div class="t" style="left:20px;top:4px;color:#fff;font-size:10px;letter-spacing:-0.2px">#AAPL,H4</div>
<div class="a" style="left:8px;top:38px;width:93px;height:34px;background:linear-gradient(#d82828,#a80000)"></div>
<div class="a" style="left:103px;top:38px;width:92px;height:34px;background:linear-gradient(#d82828,#a80000)"></div>
<div class="a" style="left:8px;top:18px;width:43px;height:21px;background:linear-gradient(#f85050,#e03030)"></div>
<div class="a" style="left:152px;top:18px;width:43px;height:21px;background:linear-gradient(#f85050,#e03030)"></div>
<div class="a" style="left:12px;top:37px;width:36px;height:1px;background:#ff9090"></div>
<div class="a" style="left:155px;top:37px;width:36px;height:1px;background:#ff9090"></div>
<div class="t" style="left:17px;top:21px;color:#ffe0e0;font-size:10px;letter-spacing:-0.2px">SELL</div>
<div class="t" style="left:162px;top:21px;color:#ffe0e0;font-size:10px;letter-spacing:-0.2px">BUY</div>
<div class="a" style="left:55px;top:19px;width:16px;height:16px;background:#D4D0C8"></div>
<div class="a" style="left:72px;top:19px;width:59px;height:16px;background:#fff"></div>
<div class="a" style="left:132px;top:19px;width:16px;height:16px;background:#D4D0C8"></div>
<svg class="a" style="left:59px;top:26px" width="7" height="4" viewBox="0 0 7 4"><path d="M0 0h7L3.5 4z" fill="#000"/></svg>
<svg class="a" style="left:136px;top:25px" width="7" height="4" viewBox="0 0 7 4"><path d="M0 4h7L3.5 0z" fill="#000"/></svg>
<div class="t r" style="left:72px;width:54px;top:20px;color:#101060;font-size:11px">0.10</div>
<div class="t" style="left:24px;top:56px;color:#fff;font-size:11px;font-weight:bold;letter-spacing:0.7px">122</div>
<div class="t" style="left:48px;top:39px;height:34px;line-height:34px;color:#fff;font-size:31px;letter-spacing:-1px">07</div>
<div class="t" style="left:118px;top:56px;color:#fff;font-size:11px;font-weight:bold;letter-spacing:0.7px">122</div>
<div class="t" style="left:142px;top:39px;height:34px;line-height:34px;color:#fff;font-size:31px;letter-spacing:-1px">09</div>
</div>
<div class="a" id="ctabs" style="left:400px;top:552px;width:1520px;height:23px;background:#D4D0C8">
<div class="a" style="left:0;top:0;width:1520px;height:2px;background:#fff"></div>
<div class="a" style="left:0;top:2px;width:1520px;height:1px;background:#000"></div>
<div class="t" style="left:0px;width:80px;text-align:center;padding-right:3px;top:4px;color:#505050;letter-spacing:-0.7px">GBPTRY,H1</div>
<div class="a" style="left:80px;top:5px;width:1px;height:13px;background:#404040"></div>
<div class="t" style="left:80px;width:80px;text-align:center;padding-right:3px;top:4px;color:#505050;letter-spacing:-0.7px">USDTRY,H1</div>
<div class="a" style="left:160px;top:5px;width:1px;height:13px;background:#404040"></div>
<div class="t" style="left:160px;width:80px;text-align:center;padding-right:3px;top:4px;color:#505050;letter-spacing:-0.7px">EURTRY,H1</div>
<div class="a" style="left:240px;top:5px;width:1px;height:13px;background:#404040"></div>
<div class="t" style="left:240px;width:80px;text-align:center;padding-right:3px;top:4px;color:#505050;letter-spacing:-0.7px">GBPZAR,H1</div>
<div class="a" style="left:320px;top:5px;width:1px;height:13px;background:#404040"></div>
<div class="t" style="left:320px;width:80px;text-align:center;padding-right:3px;top:4px;color:#505050;letter-spacing:-0.7px">USDZAR,H1</div>
<div class="a" style="left:400px;top:5px;width:1px;height:13px;background:#404040"></div>
<div class="t" style="left:400px;width:80px;text-align:center;padding-right:3px;top:4px;color:#505050;letter-spacing:-0.7px">EURZAR,H1</div>
<div class="a" style="left:480px;top:5px;width:1px;height:13px;background:#404040"></div>
<div class="t" style="left:480px;width:80px;text-align:center;padding-right:3px;top:4px;color:#505050;letter-spacing:-0.7px">GBPNZD,H1</div>
<div class="a" style="left:560px;top:5px;width:1px;height:13px;background:#404040"></div>
<div class="t" style="left:560px;width:80px;text-align:center;padding-right:3px;top:4px;color:#505050;letter-spacing:-0.7px">EURNZD,H1</div>
<div class="a" style="left:640px;top:5px;width:1px;height:13px;background:#404040"></div>
<div class="t" style="left:640px;width:80px;text-align:center;padding-right:3px;top:4px;color:#505050;letter-spacing:-0.7px">AUDNZD,H1</div>
<div class="a" style="left:720px;top:5px;width:1px;height:13px;background:#404040"></div>
<div class="t" style="left:720px;width:80px;text-align:center;padding-right:3px;top:4px;color:#505050;letter-spacing:-0.7px">GBPMXN,H1</div>
<div class="a" style="left:800px;top:5px;width:1px;height:13px;background:#404040"></div>
<div class="t" style="left:800px;width:80px;text-align:center;padding-right:3px;top:4px;color:#505050;letter-spacing:-0.7px">USDMXN,H1</div>
<div class="a" style="left:880px;top:5px;width:1px;height:13px;background:#404040"></div>
<div class="t" style="left:880px;width:80px;text-align:center;padding-right:3px;top:4px;color:#505050;letter-spacing:-0.7px">EURMXN,H1</div>
<div class="a" style="left:960px;top:5px;width:1px;height:13px;background:#404040"></div>
<div class="t" style="left:960px;width:80px;text-align:center;padding-right:3px;top:4px;color:#505050;letter-spacing:-0.7px">GBPAUD,H1</div>
<div class="a" style="left:1040px;top:5px;width:1px;height:13px;background:#404040"></div>
<div class="t" style="left:1040px;width:80px;text-align:center;padding-right:3px;top:4px;color:#505050;letter-spacing:-0.7px">EURAUD,H1</div>
<div class="a" style="left:1120px;top:0;width:72px;height:21px;background:#fff;border:1px solid #000;border-top:none;border-bottom-width:2px"></div>
<div class="t" style="left:1120px;width:72px;text-align:center;padding-right:2px;top:4px;color:#000;letter-spacing:-0.45px">#AAPL,H4</div>
<div class="t" style="left:1192px;width:80px;text-align:center;padding-right:3px;top:4px;color:#505050;letter-spacing:-0.7px">NZDUSD,H1</div>
<div class="a" style="left:1272px;top:5px;width:1px;height:13px;background:#404040"></div>
<div class="t" style="left:1272px;width:80px;text-align:center;padding-right:3px;top:4px;color:#505050;letter-spacing:-0.7px">NZDCHF,H1</div>
<div class="a" style="left:1352px;top:5px;width:1px;height:13px;background:#404040"></div>
<div class="t" style="left:1352px;width:76px;text-align:center;padding-right:3px;top:4px;color:#505050;letter-spacing:-0.7px">NZDJPY,H1</div>
<div class="a" style="left:1428px;top:5px;width:1px;height:13px;background:#404040"></div>
<div class="t" style="left:1438px;width:50px;overflow:hidden;top:4px;color:#505050;letter-spacing:-0.7px">NZDSGD,H1</div>
<svg class="a" style="left:1495px;top:8px" width="4" height="7" viewBox="0 0 4 7"><path d="M4 0v7L0 3.5z" fill="#a0a0a0"/></svg>
<svg class="a" style="left:1512px;top:8px" width="4" height="7" viewBox="0 0 4 7"><path d="M0 0v7L4 3.5z" fill="#000"/></svg>
</div>
<div class="a" style="left:2px;top:574px;width:1918px;height:1px;background:#fff"></div>
<div class="a" style="left:4px;top:573px;width:398px;height:1px;background:#808080"></div>
<div class="a" style="left:400px;top:552px;width:1px;height:21px;background:#808080"></div>
<div class="a" style="left:401px;top:552px;width:1px;height:22px;background:#404040"></div>
<div class="a" style="left:4px;top:578px;width:1916px;height:485px">
<svg class="a" style="left:4px;top:3px" width="6" height="5" viewBox="0 0 6 5"><path d="M0.500 0L5.500 5M5.500 0L0.500 5" stroke="#000" stroke-width="1.700"/></svg>
<div class="a" style="left:1px;top:14px;width:13px;height:468px;background:linear-gradient(#A6CAF0,#0A246A)"></div>
<div class="t" style="left:2px;top:480px;height:13px;line-height:13px;color:#fff;font-size:11px;letter-spacing:0.45px;transform:rotate(-90deg);transform-origin:0 0">Terminál</div>
<div class="a" style="left:15px;top:0;width:1901px;height:438px;background:#fff;border-left:1px solid #808080;border-top:1px solid #808080"></div>
<div class="hd" style="left:16px;top:1px;width:144px;text-align:left;">Megbízás</div>
<div class="hd" style="left:160px;top:1px;width:200px;text-align:right;letter-spacing:0;">Időpont</div>
<div class="hd" style="left:360px;top:1px;width:100px;text-align:right;">Típus</div>
<div class="hd" style="left:460px;top:1px;width:77px;text-align:right;">Kötésegység</div>
<div class="hd" style="left:537px;top:1px;width:100px;text-align:right;letter-spacing:0;">Instrumentum</div>
<div class="hd" style="left:637px;top:1px;width:111px;text-align:right;">Ár</div>
<div class="hd" style="left:748px;top:1px;width:111px;text-align:right;">S / L</div>
<div class="hd" style="left:859px;top:1px;width:111px;text-align:right;">T / P</div>
<div class="hd" style="left:970px;top:1px;width:111px;text-align:right;">Ár</div>
<div class="hd" style="left:1081px;top:1px;width:111px;text-align:right;">Jutalék</div>
<div class="hd" style="left:1192px;top:1px;width:111px;text-align:right;">Adók</div>
<div class="hd" style="left:1303px;top:1px;width:111px;text-align:right;padding-right:26px;">Kamat</div>
<div class="hd" style="left:1414px;top:1px;width:166px;text-align:right;padding-right:7px;">Profit</div>
<div class="hd" style="left:1580px;top:1px;width:336px;text-align:right;">Megjegyzés</div>
<svg class="a" style="left:1399px;top:5px" width="9" height="8" viewBox="0 0 9 8"><path d="M0.5 7.5L4.5 0.5L8.5 7.5z" fill="none" stroke="#fff"/><path d="M0.5 7.5L4.5 0.5" stroke="#a0a0a0" fill="none"/></svg>
<svg width="0" height="0" style="position:absolute"><defs><radialGradient id="gbr" cx="0.4" cy="0.35" r="0.65"><stop offset="0" stop-color="#ff7a48"/><stop offset="1" stop-color="#d83000"/></radialGradient><radialGradient id="gbb" cx="0.4" cy="0.35" r="0.65"><stop offset="0" stop-color="#58c4ff"/><stop offset="1" stop-color="#0a78e0"/></radialGradient><linearGradient id="gdoc" x1="0" y1="0" x2="1" y2="1"><stop offset="0.3" stop-color="#fff"/><stop offset="1" stop-color="#d8d8d8"/></linearGradient></defs></svg>
<div class="a" style="left:16px;top:19px;width:1900px;height:20px;background:#fff;border-bottom:1px solid #D0D0D0"></div>
<svg class="a" style="left:19px;top:21px" width="16" height="16" viewBox="0 0 16 16"><path d="M0.5 0.500h8l3 3v10h-11z" fill="url(#gdoc)" stroke="#606060"/><path d="M8.500 0.500v3h3" fill="none" stroke="#606060"/><circle cx="10.500" cy="11.500" r="3.100" fill="url(#gbr)" stroke="#9a2800" stroke-width="0.8"/></svg>
<div class="t" style="left:38px;top:21px">54765126</div>
<div class="t r" style="left:235px;width:120px;top:21px">2015.01.30 18:35:40</div>
<div class="t r" style="left:335px;width:120px;top:21px">sell</div>
<div class="t r" style="left:412px;width:120px;top:21px">0.10</div>
<div class="t r" style="left:512px;width:120px;top:21px">audnzd</div>
<div class="t r" style="left:623px;width:120px;top:21px">1.07134</div>
<div class="t r" style="left:734px;width:120px;top:21px">0.00000</div>
<div class="t r" style="left:845px;width:120px;top:21px">0.00000</div>
<div class="t r" style="left:956px;width:120px;top:21px">1.04991</div>
<div class="t r" style="left:1067px;width:120px;top:21px">0.00</div>
<div class="t r" style="left:1178px;width:120px;top:21px">0.00</div>
<div class="t r" style="left:1289px;width:120px;top:21px">75.38</div>
<div class="t r" style="left:1435px;width:120px;top:21px">43 290.35</div>
<svg class="a" style="left:1566px;top:25px" width="8" height="7" viewBox="0 0 8 7"><path d="M0.700 0.300L6.800 6.700M6.800 0.300L0.700 6.700" stroke="#808080" stroke-width="1.900"/></svg>
<div class="a" style="left:16px;top:39px;width:1900px;height:20px;background:#ECECEC;border-bottom:1px solid #D0D0D0"></div>
<svg class="a" style="left:19px;top:41px" width="16" height="16" viewBox="0 0 16 16"><path d="M0.5 0.500h8l3 3v10h-11z" fill="url(#gdoc)" stroke="#606060"/><path d="M8.500 0.500v3h3" fill="none" stroke="#606060"/><circle cx="10.500" cy="11.500" r="3.100" fill="url(#gbb)" stroke="#0858a8" stroke-width="0.8"/></svg>
<div class="t" style="left:38px;top:41px">54765378</div>
<div class="t r" style="left:235px;width:120px;top:41px">2015.01.30 18:37:19</div>
<div class="t r" style="left:335px;width:120px;top:41px">buy</div>
<div class="t r" style="left:412px;width:120px;top:41px">0.10</div>
<div class="t r" style="left:512px;width:120px;top:41px">nzdcad</div>
<div class="t r" style="left:623px;width:120px;top:41px">0.92103</div>
<div class="t r" style="left:734px;width:120px;top:41px">0.00000</div>
<div class="t r" style="left:845px;width:120px;top:41px">0.00000</div>
<div class="t r" style="left:956px;width:120px;top:41px">0.93073</div>
<div class="t r" style="left:1067px;width:120px;top:41px">0.00</div>
<div class="t r" style="left:1178px;width:120px;top:41px">0.00</div>
<div class="t r" style="left:1289px;width:120px;top:41px">467.03</div>
<div class="t r" style="left:1435px;width:120px;top:41px">21 018.63</div>
<svg class="a" style="left:1566px;top:45px" width="8" height="7" viewBox="0 0 8 7"><path d="M0.700 0.300L6.800 6.700M6.800 0.300L0.700 6.700" stroke="#808080" stroke-width="1.900"/></svg>
<div class="a" style="left:16px;top:59px;width:1900px;height:20px;background:#fff;border-bottom:1px solid #D0D0D0"></div>
<svg class="a" style="left:19px;top:61px" width="16" height="16" viewBox="0 0 16 16"><path d="M0.5 0.500h8l3 3v10h-11z" fill="url(#gdoc)" stroke="#606060"/><path d="M8.500 0.500v3h3" fill="none" stroke="#606060"/><circle cx="10.500" cy="11.500" r="3.100" fill="url(#gbr)" stroke="#9a2800" stroke-width="0.8"/></svg>
<div class="t" style="left:38px;top:61px">54765423</div>
<div class="t r" style="left:235px;width:120px;top:61px">2015.01.30 18:37:28</div>
<div class="t r" style="left:335px;width:120px;top:61px">sell</div>
<div class="t r" style="left:412px;width:120px;top:61px">0.10</div>
<div class="t r" style="left:512px;width:120px;top:61px">usdmxn</div>
<div class="t r" style="left:623px;width:120px;top:61px">14.99932</div>
<div class="t r" style="left:734px;width:120px;top:61px">0.00000</div>
<div class="t r" style="left:845px;width:120px;top:61px">0.00000</div>
<div class="t r" style="left:956px;width:120px;top:61px">14.97005</div>
<div class="t r" style="left:1067px;width:120px;top:61px">0.00</div>
<div class="t r" style="left:1178px;width:120px;top:61px">0.00</div>
<div class="t r" style="left:1289px;width:120px;top:61px">548.26</div>
<div class="t r" style="left:1435px;width:120px;top:61px">5 336.33</div>
<svg class="a" style="left:1566px;top:65px" width="8" height="7" viewBox="0 0 8 7"><path d="M0.700 0.300L6.800 6.700M6.800 0.300L0.700 6.700" stroke="#808080" stroke-width="1.900"/></svg>
<div class="a" style="left:16px;top:79px;width:1900px;height:20px;background:#ECECEC;border-bottom:1px solid #D0D0D0"></div>
<svg class="a" style="left:19px;top:81px" width="16" height="16" viewBox="0 0 16 16"><path d="M0.5 0.500h8l3 3v10h-11z" fill="url(#gdoc)" stroke="#606060"/><path d="M8.500 0.500v3h3" fill="none" stroke="#606060"/><circle cx="10.500" cy="11.500" r="3.100" fill="url(#gbb)" stroke="#0858a8" stroke-width="0.8"/></svg>
<div class="t" style="left:38px;top:81px">54766826</div>
<div class="t r" style="left:235px;width:120px;top:81px">2015.01.30 18:57:37</div>
<div class="t r" style="left:335px;width:120px;top:81px">buy</div>
<div class="t r" style="left:412px;width:120px;top:81px">0.10</div>
<div class="t r" style="left:512px;width:120px;top:81px">audusd</div>
<div class="t r" style="left:623px;width:120px;top:81px">0.77615</div>
<div class="t r" style="left:734px;width:120px;top:81px">0.00000</div>
<div class="t r" style="left:845px;width:120px;top:81px">0.00000</div>
<div class="t r" style="left:956px;width:120px;top:81px">0.77682</div>
<div class="t r" style="left:1067px;width:120px;top:81px">0.00</div>
<div class="t r" style="left:1178px;width:120px;top:81px">0.00</div>
<div class="t r" style="left:1289px;width:120px;top:81px">556.31</div>
<div class="t r" style="left:1435px;width:120px;top:81px">1 825.92</div>
<svg class="a" style="left:1566px;top:85px" width="8" height="7" viewBox="0 0 8 7"><path d="M0.700 0.300L6.800 6.700M6.800 0.300L0.700 6.700" stroke="#808080" stroke-width="1.900"/></svg>
<div class="a" style="left:16px;top:99px;width:1900px;height:20px;background:#fff;border-bottom:1px solid #D0D0D0"></div>
<svg class="a" style="left:19px;top:101px" width="16" height="16" viewBox="0 0 16 16"><path d="M0.5 0.500h8l3 3v10h-11z" fill="url(#gdoc)" stroke="#606060"/><path d="M8.500 0.500v3h3" fill="none" stroke="#606060"/><circle cx="10.500" cy="11.500" r="3.100" fill="url(#gbb)" stroke="#0858a8" stroke-width="0.8"/></svg>
<div class="t" style="left:38px;top:101px">54766837</div>
<div class="t r" style="left:235px;width:120px;top:101px">2015.01.30 18:57:52</div>
<div class="t r" style="left:335px;width:120px;top:101px">buy</div>
<div class="t r" style="left:412px;width:120px;top:101px">0.10</div>
<div class="t r" style="left:512px;width:120px;top:101px">audjpy</div>
<div class="t r" style="left:623px;width:120px;top:101px">91.164</div>
<div class="t r" style="left:734px;width:120px;top:101px">0.000</div>
<div class="t r" style="left:845px;width:120px;top:101px">0.000</div>
<div class="t r" style="left:956px;width:120px;top:101px">92.736</div>
<div class="t r" style="left:1067px;width:120px;top:101px">0.00</div>
<div class="t r" style="left:1178px;width:120px;top:101px">0.00</div>
<div class="t r" style="left:1289px;width:120px;top:101px">572.16</div>
<div class="t r" style="left:1435px;width:120px;top:101px">35 885.89</div>
<svg class="a" style="left:1566px;top:105px" width="8" height="7" viewBox="0 0 8 7"><path d="M0.700 0.300L6.800 6.700M6.800 0.300L0.700 6.700" stroke="#808080" stroke-width="1.900"/></svg>
<div class="a" style="left:16px;top:119px;width:1900px;height:20px;background:#ECECEC;border-bottom:1px solid #D0D0D0"></div>
<svg class="a" style="left:19px;top:121px" width="16" height="16" viewBox="0 0 16 16"><path d="M0.5 0.500h8l3 3v10h-11z" fill="url(#gdoc)" stroke="#606060"/><path d="M8.500 0.500v3h3" fill="none" stroke="#606060"/><circle cx="10.500" cy="11.500" r="3.100" fill="url(#gbr)" stroke="#9a2800" stroke-width="0.8"/></svg>
<div class="t" style="left:38px;top:121px">54765408</div>
<div class="t r" style="left:235px;width:120px;top:121px">2015.01.30 18:37:25</div>
<div class="t r" style="left:335px;width:120px;top:121px">sell</div>
<div class="t r" style="left:412px;width:120px;top:121px">0.10</div>
<div class="t r" style="left:512px;width:120px;top:121px">gbpmxn</div>
<div class="t r" style="left:623px;width:120px;top:121px">22.54327</div>
<div class="t r" style="left:734px;width:120px;top:121px">0.00000</div>
<div class="t r" style="left:845px;width:120px;top:121px">0.00000</div>
<div class="t r" style="left:956px;width:120px;top:121px">22.83500</div>
<div class="t r" style="left:1067px;width:120px;top:121px">0.00</div>
<div class="t r" style="left:1178px;width:120px;top:121px">0.00</div>
<div class="t r" style="left:1289px;width:120px;top:121px">636.35</div>
<div class="t r" style="left:1435px;width:120px;top:121px">-53 186.82</div>
<svg class="a" style="left:1566px;top:125px" width="8" height="7" viewBox="0 0 8 7"><path d="M0.700 0.300L6.800 6.700M6.800 0.300L0.700 6.700" stroke="#808080" stroke-width="1.900"/></svg>
<div class="a" style="left:16px;top:139px;width:1900px;height:20px;background:#fff;border-bottom:1px solid #D0D0D0"></div>
<svg class="a" style="left:19px;top:141px" width="16" height="16" viewBox="0 0 16 16"><path d="M0.5 0.500h8l3 3v10h-11z" fill="url(#gdoc)" stroke="#606060"/><path d="M8.500 0.500v3h3" fill="none" stroke="#606060"/><circle cx="10.500" cy="11.500" r="3.100" fill="url(#gbr)" stroke="#9a2800" stroke-width="0.8"/></svg>
<div class="t" style="left:38px;top:141px">54766835</div>
<div class="t r" style="left:235px;width:120px;top:141px">2015.01.30 18:57:46</div>
<div class="t r" style="left:335px;width:120px;top:141px">sell</div>
<div class="t r" style="left:412px;width:120px;top:141px">0.10</div>
<div class="t r" style="left:512px;width:120px;top:141px">euraud</div>
<div class="t r" style="left:623px;width:120px;top:141px">1.45488</div>
<div class="t r" style="left:734px;width:120px;top:141px">0.00000</div>
<div class="t r" style="left:845px;width:120px;top:141px">0.00000</div>
<div class="t r" style="left:956px;width:120px;top:141px">1.45713</div>
<div class="t r" style="left:1067px;width:120px;top:141px">0.00</div>
<div class="t r" style="left:1178px;width:120px;top:141px">0.00</div>
<div class="t r" style="left:1289px;width:120px;top:141px">797.40</div>
<div class="t r" style="left:1435px;width:120px;top:141px">-4 771.23</div>
<svg class="a" style="left:1566px;top:145px" width="8" height="7" viewBox="0 0 8 7"><path d="M0.700 0.300L6.800 6.700M6.800 0.300L0.700 6.700" stroke="#808080" stroke-width="1.900"/></svg>
<div class="a" style="left:16px;top:159px;width:1900px;height:20px;background:#ECECEC;border-bottom:1px solid #D0D0D0"></div>
<svg class="a" style="left:19px;top:161px" width="16" height="16" viewBox="0 0 16 16"><path d="M0.5 0.500h8l3 3v10h-11z" fill="url(#gdoc)" stroke="#606060"/><path d="M8.500 0.500v3h3" fill="none" stroke="#606060"/><circle cx="10.500" cy="11.500" r="3.100" fill="url(#gbb)" stroke="#0858a8" stroke-width="0.8"/></svg>
<div class="t" style="left:38px;top:161px">54765036</div>
<div class="t r" style="left:235px;width:120px;top:161px">2015.01.30 18:34:14</div>
<div class="t r" style="left:335px;width:120px;top:161px">buy</div>
<div class="t r" style="left:412px;width:120px;top:161px">0.10</div>
<div class="t r" style="left:512px;width:120px;top:161px">nzdjpy</div>
<div class="t r" style="left:623px;width:120px;top:161px">85.136</div>
<div class="t r" style="left:734px;width:120px;top:161px">0.000</div>
<div class="t r" style="left:845px;width:120px;top:161px">0.000</div>
<div class="t r" style="left:956px;width:120px;top:161px">88.342</div>
<div class="t r" style="left:1067px;width:120px;top:161px">0.00</div>
<div class="t r" style="left:1178px;width:120px;top:161px">0.00</div>
<div class="t r" style="left:1289px;width:120px;top:161px">833.35</div>
<div class="t r" style="left:1435px;width:120px;top:161px">73 187.12</div>
<svg class="a" style="left:1566px;top:165px" width="8" height="7" viewBox="0 0 8 7"><path d="M0.700 0.300L6.800 6.700M6.800 0.300L0.700 6.700" stroke="#808080" stroke-width="1.900"/></svg>
<div class="a" style="left:16px;top:179px;width:1900px;height:20px;background:#fff;border-bottom:1px solid #D0D0D0"></div>
<svg class="a" style="left:19px;top:181px" width="16" height="16" viewBox="0 0 16 16"><path d="M0.5 0.500h8l3 3v10h-11z" fill="url(#gdoc)" stroke="#606060"/><path d="M8.500 0.500v3h3" fill="none" stroke="#606060"/><circle cx="10.500" cy="11.500" r="3.100" fill="url(#gbr)" stroke="#9a2800" stroke-width="0.8"/></svg>
<div class="t" style="left:38px;top:181px">54765435</div>
<div class="t r" style="left:235px;width:120px;top:181px">2015.01.30 18:37:31</div>
<div class="t r" style="left:335px;width:120px;top:181px">sell</div>
<div class="t r" style="left:412px;width:120px;top:181px">0.10</div>
<div class="t r" style="left:512px;width:120px;top:181px">eurmxn</div>
<div class="t r" style="left:623px;width:120px;top:181px">16.94027</div>
<div class="t r" style="left:734px;width:120px;top:181px">0.00000</div>
<div class="t r" style="left:845px;width:120px;top:181px">0.00000</div>
<div class="t r" style="left:956px;width:120px;top:181px">16.94459</div>
<div class="t r" style="left:1067px;width:120px;top:181px">0.00</div>
<div class="t r" style="left:1178px;width:120px;top:181px">0.00</div>
<div class="t r" style="left:1289px;width:120px;top:181px">889.43</div>
<div class="t r" style="left:1435px;width:120px;top:181px">-787.60</div>
<svg class="a" style="left:1566px;top:185px" width="8" height="7" viewBox="0 0 8 7"><path d="M0.700 0.300L6.800 6.700M6.800 0.300L0.700 6.700" stroke="#808080" stroke-width="1.900"/></svg>
<div class="a" style="left:16px;top:199px;width:1900px;height:20px;background:#ECECEC;border-bottom:1px solid #D0D0D0"></div>
<svg class="a" style="left:19px;top:201px" width="16" height="16" viewBox="0 0 16 16"><path d="M0.5 0.500h8l3 3v10h-11z" fill="url(#gdoc)" stroke="#606060"/><path d="M8.500 0.500v3h3" fill="none" stroke="#606060"/><circle cx="10.500" cy="11.500" r="3.100" fill="url(#gbb)" stroke="#0858a8" stroke-width="0.8"/></svg>
<div class="t" style="left:38px;top:201px">54765234</div>
<div class="t r" style="left:235px;width:120px;top:201px">2015.01.30 18:36:40</div>
<div class="t r" style="left:335px;width:120px;top:201px">buy</div>
<div class="t r" style="left:412px;width:120px;top:201px">0.10</div>
<div class="t r" style="left:512px;width:120px;top:201px">nzdsgd</div>
<div class="t r" style="left:623px;width:120px;top:201px">0.98212</div>
<div class="t r" style="left:734px;width:120px;top:201px">0.00000</div>
<div class="t r" style="left:845px;width:120px;top:201px">0.00000</div>
<div class="t r" style="left:956px;width:120px;top:201px">1.00188</div>
<div class="t r" style="left:1067px;width:120px;top:201px">0.00</div>
<div class="t r" style="left:1178px;width:120px;top:201px">0.00</div>
<div class="t r" style="left:1289px;width:120px;top:201px">896.81</div>
<div class="t r" style="left:1435px;width:120px;top:201px">39 763.22</div>
<svg class="a" style="left:1566px;top:205px" width="8" height="7" viewBox="0 0 8 7"><path d="M0.700 0.300L6.800 6.700M6.800 0.300L0.700 6.700" stroke="#808080" stroke-width="1.900"/></svg>
<div class="a" style="left:16px;top:219px;width:1900px;height:20px;background:#fff;border-bottom:1px solid #D0D0D0"></div>
<svg class="a" style="left:19px;top:221px" width="16" height="16" viewBox="0 0 16 16"><path d="M0.5 0.500h8l3 3v10h-11z" fill="url(#gdoc)" stroke="#606060"/><path d="M8.500 0.500v3h3" fill="none" stroke="#606060"/><circle cx="10.500" cy="11.500" r="3.100" fill="url(#gbr)" stroke="#9a2800" stroke-width="0.8"/></svg>
<div class="t" style="left:38px;top:221px">54766820</div>
<div class="t r" style="left:235px;width:120px;top:221px">2015.01.30 18:57:31</div>
<div class="t r" style="left:335px;width:120px;top:221px">sell</div>
<div class="t r" style="left:412px;width:120px;top:221px">0.10</div>
<div class="t r" style="left:512px;width:120px;top:221px">gbpaud</div>
<div class="t r" style="left:623px;width:120px;top:221px">1.93599</div>
<div class="t r" style="left:734px;width:120px;top:221px">0.00000</div>
<div class="t r" style="left:845px;width:120px;top:221px">0.00000</div>
<div class="t r" style="left:956px;width:120px;top:221px">1.96343</div>
<div class="t r" style="left:1067px;width:120px;top:221px">0.00</div>
<div class="t r" style="left:1178px;width:120px;top:221px">0.00</div>
<div class="t r" style="left:1289px;width:120px;top:221px">911.31</div>
<div class="t r" style="left:1435px;width:120px;top:221px">-58 187.76</div>
<svg class="a" style="left:1566px;top:225px" width="8" height="7" viewBox="0 0 8 7"><path d="M0.700 0.300L6.800 6.700M6.800 0.300L0.700 6.700" stroke="#808080" stroke-width="1.900"/></svg>
<div class="a" style="left:16px;top:239px;width:1900px;height:20px;background:#ECECEC;border-bottom:1px solid #D0D0D0"></div>
<svg class="a" style="left:19px;top:241px" width="16" height="16" viewBox="0 0 16 16"><path d="M0.5 0.500h8l3 3v10h-11z" fill="url(#gdoc)" stroke="#606060"/><path d="M8.500 0.500v3h3" fill="none" stroke="#606060"/><circle cx="10.500" cy="11.500" r="3.100" fill="url(#gbb)" stroke="#0858a8" stroke-width="0.8"/></svg>
<div class="t" style="left:38px;top:241px">54765007</div>
<div class="t r" style="left:235px;width:120px;top:241px">2015.01.30 18:33:56</div>
<div class="t r" style="left:335px;width:120px;top:241px">buy</div>
<div class="t r" style="left:412px;width:120px;top:241px">0.10</div>
<div class="t r" style="left:512px;width:120px;top:241px">nzdusd</div>
<div class="t r" style="left:623px;width:120px;top:241px">0.72497</div>
<div class="t r" style="left:734px;width:120px;top:241px">0.00000</div>
<div class="t r" style="left:845px;width:120px;top:241px">0.00000</div>
<div class="t r" style="left:956px;width:120px;top:241px">0.74003</div>
<div class="t r" style="left:1067px;width:120px;top:241px">0.00</div>
<div class="t r" style="left:1178px;width:120px;top:241px">0.00</div>
<div class="t r" style="left:1289px;width:120px;top:241px">1 112.62</div>
<div class="t r" style="left:1435px;width:120px;top:241px">41 042.27</div>
<svg class="a" style="left:1566px;top:245px" width="8" height="7" viewBox="0 0 8 7"><path d="M0.700 0.300L6.800 6.700M6.800 0.300L0.700 6.700" stroke="#808080" stroke-width="1.900"/></svg>
<div class="a" style="left:16px;top:259px;width:1900px;height:20px;background:#fff;border-bottom:1px solid #D0D0D0"></div>
<svg class="a" style="left:19px;top:261px" width="16" height="16" viewBox="0 0 16 16"><path d="M0.5 0.500h8l3 3v10h-11z" fill="url(#gdoc)" stroke="#606060"/><path d="M8.500 0.500v3h3" fill="none" stroke="#606060"/><circle cx="10.500" cy="11.500" r="3.100" fill="url(#gbb)" stroke="#0858a8" stroke-width="0.8"/></svg>
<div class="t" style="left:38px;top:261px">54765027</div>
<div class="t r" style="left:235px;width:120px;top:261px">2015.01.30 18:34:10</div>
<div class="t r" style="left:335px;width:120px;top:261px">buy</div>
<div class="t r" style="left:412px;width:120px;top:261px">0.10</div>
<div class="t r" style="left:512px;width:120px;top:261px">nzdchf</div>
<div class="t r" style="left:623px;width:120px;top:261px">0.66863</div>
<div class="t r" style="left:734px;width:120px;top:261px">0.00000</div>
<div class="t r" style="left:845px;width:120px;top:261px">0.00000</div>
<div class="t r" style="left:956px;width:120px;top:261px">0.68556</div>
<div class="t r" style="left:1067px;width:120px;top:261px">0.00</div>
<div class="t r" style="left:1178px;width:120px;top:261px">0.00</div>
<div class="t r" style="left:1289px;width:120px;top:261px">1 225.01</div>
<div class="t r" style="left:1435px;width:120px;top:261px">49 800.30</div>
<svg class="a" style="left:1566px;top:265px" width="8" height="7" viewBox="0 0 8 7"><path d="M0.700 0.300L6.800 6.700M6.800 0.300L0.700 6.700" stroke="#808080" stroke-width="1.900"/></svg>
<div class="a" style="left:16px;top:279px;width:1900px;height:20px;background:#ECECEC;border-bottom:1px solid #D0D0D0"></div>
<svg class="a" style="left:19px;top:281px" width="16" height="16" viewBox="0 0 16 16"><path d="M0.5 0.500h8l3 3v10h-11z" fill="url(#gdoc)" stroke="#606060"/><path d="M8.500 0.500v3h3" fill="none" stroke="#606060"/><circle cx="10.500" cy="11.500" r="3.100" fill="url(#gbr)" stroke="#9a2800" stroke-width="0.8"/></svg>
<div class="t" style="left:38px;top:281px">54765021</div>
<div class="t r" style="left:235px;width:120px;top:281px">2015.01.30 18:34:02</div>
<div class="t r" style="left:335px;width:120px;top:281px">sell</div>
<div class="t r" style="left:412px;width:120px;top:281px">0.10</div>
<div class="t r" style="left:512px;width:120px;top:281px">eurnzd</div>
<div class="t r" style="left:623px;width:120px;top:281px">1.55690</div>
<div class="t r" style="left:734px;width:120px;top:281px">0.00000</div>
<div class="t r" style="left:845px;width:120px;top:281px">0.00000</div>
<div class="t r" style="left:956px;width:120px;top:281px">1.52945</div>
<div class="t r" style="left:1067px;width:120px;top:281px">0.00</div>
<div class="t r" style="left:1178px;width:120px;top:281px">0.00</div>
<div class="t r" style="left:1289px;width:120px;top:281px">1 313.44</div>
<div class="t r" style="left:1435px;width:120px;top:281px">55 451.24</div>
<svg class="a" style="left:1566px;top:285px" width="8" height="7" viewBox="0 0 8 7"><path d="M0.700 0.300L6.800 6.700M6.800 0.300L0.700 6.700" stroke="#808080" stroke-width="1.900"/></svg>
<div class="a" style="left:16px;top:299px;width:1900px;height:20px;background:#fff;border-bottom:1px solid #D0D0D0"></div>
<svg class="a" style="left:19px;top:301px" width="16" height="16" viewBox="0 0 16 16"><path d="M0.5 0.500h8l3 3v10h-11z" fill="url(#gdoc)" stroke="#606060"/><path d="M8.500 0.500v3h3" fill="none" stroke="#606060"/><circle cx="10.500" cy="11.500" r="3.100" fill="url(#gbr)" stroke="#9a2800" stroke-width="0.8"/></svg>
<div class="t" style="left:38px;top:301px">54764275</div>
<div class="t r" style="left:235px;width:120px;top:301px">2015.01.30 18:21:43</div>
<div class="t r" style="left:335px;width:120px;top:301px">sell</div>
<div class="t r" style="left:412px;width:120px;top:301px">0.10</div>
<div class="t r" style="left:512px;width:120px;top:301px">usdzar</div>
<div class="t r" style="left:623px;width:120px;top:301px">11.64236</div>
<div class="t r" style="left:734px;width:120px;top:301px">0.00000</div>
<div class="t r" style="left:845px;width:120px;top:301px">0.00000</div>
<div class="t r" style="left:956px;width:120px;top:301px">11.68678</div>
<div class="t r" style="left:1067px;width:120px;top:301px">0.00</div>
<div class="t r" style="left:1178px;width:120px;top:301px">0.00</div>
<div class="t r" style="left:1289px;width:120px;top:301px">1 393.21</div>
<div class="t r" style="left:1435px;width:120px;top:301px">-10 373.54</div>
<svg class="a" style="left:1566px;top:305px" width="8" height="7" viewBox="0 0 8 7"><path d="M0.700 0.300L6.800 6.700M6.800 0.300L0.700 6.700" stroke="#808080" stroke-width="1.900"/></svg>
<div class="a" style="left:16px;top:319px;width:1900px;height:20px;background:#ECECEC;border-bottom:1px solid #D0D0D0"></div>
<svg class="a" style="left:19px;top:321px" width="16" height="16" viewBox="0 0 16 16"><path d="M0.5 0.500h8l3 3v10h-11z" fill="url(#gdoc)" stroke="#606060"/><path d="M8.500 0.500v3h3" fill="none" stroke="#606060"/><circle cx="10.500" cy="11.500" r="3.100" fill="url(#gbr)" stroke="#9a2800" stroke-width="0.8"/></svg>
<div class="t" style="left:38px;top:321px">54765005</div>
<div class="t r" style="left:235px;width:120px;top:321px">2015.01.30 18:33:49</div>
<div class="t r" style="left:335px;width:120px;top:321px">sell</div>
<div class="t r" style="left:412px;width:120px;top:321px">0.10</div>
<div class="t r" style="left:512px;width:120px;top:321px">gbpnzd</div>
<div class="t r" style="left:623px;width:120px;top:321px">2.07106</div>
<div class="t r" style="left:734px;width:120px;top:321px">0.00000</div>
<div class="t r" style="left:845px;width:120px;top:321px">0.00000</div>
<div class="t r" style="left:956px;width:120px;top:321px">2.06103</div>
<div class="t r" style="left:1067px;width:120px;top:321px">0.00</div>
<div class="t r" style="left:1178px;width:120px;top:321px">0.00</div>
<div class="t r" style="left:1289px;width:120px;top:321px">1 751.27</div>
<div class="t r" style="left:1435px;width:120px;top:321px">20 261.15</div>
<svg class="a" style="left:1566px;top:325px" width="8" height="7" viewBox="0 0 8 7"><path d="M0.700 0.300L6.800 6.700M6.800 0.300L0.700 6.700" stroke="#808080" stroke-width="1.900"/></svg>
<div class="a" style="left:16px;top:339px;width:1900px;height:20px;background:#fff;border-bottom:1px solid #D0D0D0"></div>
<svg class="a" style="left:19px;top:341px" width="16" height="16" viewBox="0 0 16 16"><path d="M0.5 0.500h8l3 3v10h-11z" fill="url(#gdoc)" stroke="#606060"/><path d="M8.500 0.500v3h3" fill="none" stroke="#606060"/><circle cx="10.500" cy="11.500" r="3.100" fill="url(#gbr)" stroke="#9a2800" stroke-width="0.8"/></svg>
<div class="t" style="left:38px;top:341px">54764277</div>
<div class="t r" style="left:235px;width:120px;top:341px">2015.01.30 18:21:45</div>
<div class="t r" style="left:335px;width:120px;top:341px">sell</div>
<div class="t r" style="left:412px;width:120px;top:341px">0.10</div>
<div class="t r" style="left:512px;width:120px;top:341px">eurzar</div>
<div class="t r" style="left:623px;width:120px;top:341px">13.13875</div>
<div class="t r" style="left:734px;width:120px;top:341px">0.00000</div>
<div class="t r" style="left:845px;width:120px;top:341px">0.00000</div>
<div class="t r" style="left:956px;width:120px;top:341px">13.22976</div>
<div class="t r" style="left:1067px;width:120px;top:341px">0.00</div>
<div class="t r" style="left:1178px;width:120px;top:341px">0.00</div>
<div class="t r" style="left:1289px;width:120px;top:341px">1 909.95</div>
<div class="t r" style="left:1435px;width:120px;top:341px">-21 254.58</div>
<svg class="a" style="left:1566px;top:345px" width="8" height="7" viewBox="0 0 8 7"><path d="M0.700 0.300L6.800 6.700M6.800 0.300L0.700 6.700" stroke="#808080" stroke-width="1.900"/></svg>
<div class="a" style="left:16px;top:359px;width:1900px;height:20px;background:#ECECEC;border-bottom:1px solid #D0D0D0"></div>
<svg class="a" style="left:19px;top:361px" width="16" height="16" viewBox="0 0 16 16"><path d="M0.5 0.500h8l3 3v10h-11z" fill="url(#gdoc)" stroke="#606060"/><path d="M8.500 0.500v3h3" fill="none" stroke="#606060"/><circle cx="10.500" cy="11.500" r="3.100" fill="url(#gbr)" stroke="#9a2800" stroke-width="0.8"/></svg>
<div class="t" style="left:38px;top:361px">54762469</div>
<div class="t r" style="left:235px;width:120px;top:361px">2015.01.30 18:01:24</div>
<div class="t r" style="left:335px;width:120px;top:361px">sell</div>
<div class="t r" style="left:412px;width:120px;top:361px">0.10</div>
<div class="t r" style="left:512px;width:120px;top:361px">eurtry</div>
<div class="t r" style="left:623px;width:120px;top:361px">2.75157</div>
<div class="t r" style="left:734px;width:120px;top:361px">0.00000</div>
<div class="t r" style="left:845px;width:120px;top:361px">0.00000</div>
<div class="t r" style="left:956px;width:120px;top:361px">2.82738</div>
<div class="t r" style="left:1067px;width:120px;top:361px">0.00</div>
<div class="t r" style="left:1178px;width:120px;top:361px">0.00</div>
<div class="t r" style="left:1289px;width:120px;top:361px">2 091.95</div>
<div class="t r" style="left:1435px;width:120px;top:361px">-82 844.63</div>
<svg class="a" style="left:1566px;top:365px" width="8" height="7" viewBox="0 0 8 7"><path d="M0.700 0.300L6.800 6.700M6.800 0.300L0.700 6.700" stroke="#808080" stroke-width="1.900"/></svg>
<div class="a" style="left:16px;top:379px;width:1900px;height:20px;background:#fff;border-bottom:1px solid #D0D0D0"></div>
<svg class="a" style="left:19px;top:381px" width="16" height="16" viewBox="0 0 16 16"><path d="M0.5 0.500h8l3 3v10h-11z" fill="url(#gdoc)" stroke="#606060"/><path d="M8.500 0.500v3h3" fill="none" stroke="#606060"/><circle cx="10.500" cy="11.500" r="3.100" fill="url(#gbr)" stroke="#9a2800" stroke-width="0.8"/></svg>
<div class="t" style="left:38px;top:381px">54762451</div>
<div class="t r" style="left:235px;width:120px;top:381px">2015.01.30 18:01:18</div>
<div class="t r" style="left:335px;width:120px;top:381px">sell</div>
<div class="t r" style="left:412px;width:120px;top:381px">0.10</div>
<div class="t r" style="left:512px;width:120px;top:381px">gbptry</div>
<div class="t r" style="left:623px;width:120px;top:381px">3.65722</div>
<div class="t r" style="left:734px;width:120px;top:381px">0.00000</div>
<div class="t r" style="left:845px;width:120px;top:381px">0.00000</div>
<div class="t r" style="left:956px;width:120px;top:381px">3.81019</div>
<div class="t r" style="left:1067px;width:120px;top:381px">0.00</div>
<div class="t r" style="left:1178px;width:120px;top:381px">0.00</div>
<div class="t r" style="left:1289px;width:120px;top:381px">2 301.14</div>
<div class="t r" style="left:1435px;width:120px;top:381px">-167 164.51</div>
<svg class="a" style="left:1566px;top:385px" width="8" height="7" viewBox="0 0 8 7"><path d="M0.700 0.300L6.800 6.700M6.800 0.300L0.700 6.700" stroke="#808080" stroke-width="1.900"/></svg>
<div class="a" style="left:16px;top:399px;width:1900px;height:20px;background:#ECECEC;border-bottom:1px solid #D0D0D0"></div>
<svg class="a" style="left:19px;top:401px" width="16" height="16" viewBox="0 0 16 16"><path d="M0.5 0.500h8l3 3v10h-11z" fill="url(#gdoc)" stroke="#606060"/><path d="M8.500 0.500v3h3" fill="none" stroke="#606060"/><circle cx="10.500" cy="11.500" r="3.100" fill="url(#gbr)" stroke="#9a2800" stroke-width="0.8"/></svg>
<div class="t" style="left:38px;top:401px">54764270</div>
<div class="t r" style="left:235px;width:120px;top:401px">2015.01.30 18:21:39</div>
<div class="t r" style="left:335px;width:120px;top:401px">sell</div>
<div class="t r" style="left:412px;width:120px;top:401px">0.10</div>
<div class="t r" style="left:512px;width:120px;top:401px">gbpzar</div>
<div class="t r" style="left:623px;width:120px;top:401px">17.48287</div>
<div class="t r" style="left:734px;width:120px;top:401px">0.00000</div>
<div class="t r" style="left:845px;width:120px;top:401px">0.00000</div>
<div class="t r" style="left:956px;width:120px;top:401px">17.82368</div>
<div class="t r" style="left:1067px;width:120px;top:401px">0.00</div>
<div class="t r" style="left:1178px;width:120px;top:401px">0.00</div>
<div class="t r" style="left:1289px;width:120px;top:401px">2 725.21</div>
<div class="t r" style="left:1435px;width:120px;top:401px">-79 590.42</div>
<svg class="a" style="left:1566px;top:405px" width="8" height="7" viewBox="0 0 8 7"><path d="M0.700 0.300L6.800 6.700M6.800 0.300L0.700 6.700" stroke="#808080" stroke-width="1.900"/></svg>
<div class="a" style="left:16px;top:419px;width:1900px;height:20px;background:#fff;border-bottom:1px solid #D0D0D0"></div>
<svg class="a" style="left:19px;top:421px" width="16" height="16" viewBox="0 0 16 16"><path d="M0.5 0.500h8l3 3v10h-11z" fill="url(#gdoc)" stroke="#606060"/><path d="M8.500 0.500v3h3" fill="none" stroke="#606060"/><circle cx="10.500" cy="11.500" r="3.100" fill="url(#gbr)" stroke="#9a2800" stroke-width="0.8"/></svg>
<div class="t" style="left:38px;top:421px">54762456</div>
<div class="t r" style="left:235px;width:120px;top:421px">2015.01.30 18:01:22</div>
<div class="t r" style="left:335px;width:120px;top:421px">sell</div>
<div class="t r" style="left:412px;width:120px;top:421px">0.10</div>
<div class="t r" style="left:512px;width:120px;top:421px">usdtry</div>
<div class="t r" style="left:623px;width:120px;top:421px">2.43682</div>
<div class="t r" style="left:734px;width:120px;top:421px">0.00000</div>
<div class="t r" style="left:845px;width:120px;top:421px">0.00000</div>
<div class="t r" style="left:956px;width:120px;top:421px">2.49750</div>
<div class="t r" style="left:1067px;width:120px;top:421px">0.00</div>
<div class="t r" style="left:1178px;width:120px;top:421px">0.00</div>
<div class="t r" style="left:1289px;width:120px;top:421px">4 339.30</div>
<div class="t r" style="left:1435px;width:120px;top:421px">-66 310.67</div>
<svg class="a" style="left:1566px;top:425px" width="8" height="7" viewBox="0 0 8 7"><path d="M0.700 0.300L6.800 6.700M6.800 0.300L0.700 6.700" stroke="#808080" stroke-width="1.900"/></svg>
<div class="a" style="left:158px;top:18px;width:1px;height:420px;background:#D0D0D0"></div>
<div class="a" style="left:358px;top:18px;width:1px;height:420px;background:#D0D0D0"></div>
<div class="a" style="left:458px;top:18px;width:1px;height:420px;background:#D0D0D0"></div>
<div class="a" style="left:535px;top:18px;width:1px;height:420px;background:#D0D0D0"></div>
<div class="a" style="left:635px;top:18px;width:1px;height:420px;background:#D0D0D0"></div>
<div class="a" style="left:746px;top:18px;width:1px;height:420px;background:#D0D0D0"></div>
<div class="a" style="left:857px;top:18px;width:1px;height:420px;background:#D0D0D0"></div>
<div class="a" style="left:968px;top:18px;width:1px;height:420px;background:#D0D0D0"></div>
<div class="a" style="left:1079px;top:18px;width:1px;height:420px;background:#D0D0D0"></div>
<div class="a" style="left:1190px;top:18px;width:1px;height:420px;background:#D0D0D0"></div>
<div class="a" style="left:1301px;top:18px;width:1px;height:420px;background:#D0D0D0"></div>
<div class="a" style="left:1412px;top:18px;width:1px;height:420px;background:#D0D0D0"></div>
<div class="a" style="left:1578px;top:18px;width:1px;height:420px;background:#D0D0D0"></div>
<div class="a" style="left:16px;top:438px;width:1900px;height:20px;background:#C8C8C8"></div>
<div class="a" style="left:19px;top:441px;width:12px;height:14px;background:#fff;border:1px solid #808080;border-radius:1px"></div>
<svg class="a" style="left:21px;top:444px" width="9" height="8" viewBox="0 0 10 10"><path d="M5 9.5L9.5 4.5H6.8V0.5H3.2V4.5H0.5z" fill="#e8301c"/></svg>
<div class="t" style="left:37.0px;top:441px;font-weight:bold;white-space:pre;letter-spacing:0.35px">Egyenleg: 10 000 000.00 HUF</div>
<div class="t" style="left:204.0px;top:441px;font-weight:bold;white-space:pre;letter-spacing:0.63px">Saját tőke: 9 869 737.55</div>
<div class="t" style="left:347.4px;top:441px;font-weight:bold;white-space:pre;letter-spacing:0.53px">Margin: 157 681.96</div>
<div class="t" style="left:460.2px;top:441px;font-weight:bold;white-space:pre;letter-spacing:0.49px">Szabad margin: 9 712 055.59</div>
<div class="t" style="left:628.2px;top:441px;font-weight:bold;white-space:pre;letter-spacing:0.63px">Margin szint: 6259.27%</div>
<div class="t" style="left:1488.2px;top:441px;font-weight:bold;letter-spacing:0.86px">-130 262.45</div>
<div class="a" style="left:16px;top:458px;width:1900px;height:3px;background:#fff"></div>
<div class="a" style="left:16px;top:461px;width:1900px;height:1px;background:#000"></div>
<div class="a" style="left:18px;top:461px;width:75px;height:18px;background:#fff;border:1px solid #000;border-top:none"></div>
<div class="t" style="left:27px;top:463px;letter-spacing:-0.25px">Kereskedés</div>
<div class="t" style="left:102px;top:463px;color:#404040;letter-spacing:-0.1px">Kitettség</div>
<div class="t" style="left:165px;top:463px;color:#404040;letter-spacing:-0.1px">Számlatörténet</div>
<div class="t" style="left:258px;top:463px;color:#404040;letter-spacing:-0.1px">Hírek</div>
<div class="t" style="left:314px;top:463px;color:#404040;letter-spacing:-0.1px">Figyelmeztetések</div>
<div class="t" style="left:417px;top:463px;color:#404040;letter-spacing:-0.1px">Levelesláda</div>
<div class="t" style="left:493px;top:463px;color:#404040;letter-spacing:-0.1px">Piac</div>
<div class="t" style="left:544px;top:463px;color:#404040;letter-spacing:-0.1px">Szignálok</div>
<div class="t" style="left:608px;top:463px;color:#404040;letter-spacing:-0.1px">Kódbázis</div>
<div class="t" style="left:670px;top:463px;color:#404040;letter-spacing:-0.1px">Expert napló</div>
<div class="t" style="left:751px;top:463px;color:#404040;letter-spacing:-0.1px">Napló</div>
<div class="a" style="left:156px;top:465px;width:1px;height:12px;background:#404040"></div>
<div class="a" style="left:249px;top:465px;width:1px;height:12px;background:#404040"></div>
<div class="a" style="left:305px;top:465px;width:1px;height:12px;background:#404040"></div>
<div class="a" style="left:408px;top:465px;width:1px;height:12px;background:#404040"></div>
<div class="a" style="left:484px;top:465px;width:1px;height:12px;background:#404040"></div>
<div class="a" style="left:535px;top:465px;width:1px;height:12px;background:#404040"></div>
<div class="a" style="left:598px;top:465px;width:1px;height:12px;background:#404040"></div>
<div class="a" style="left:660px;top:465px;width:1px;height:12px;background:#404040"></div>
<div class="a" style="left:742px;top:465px;width:1px;height:12px;background:#404040"></div>
<div class="a" style="left:790px;top:465px;width:1px;height:12px;background:#404040"></div>
<div class="t" style="left:285px;top:466px;color:#f00;font-size:9px;font-weight:bold">99</div>
<div class="t" style="left:514px;top:466px;color:#f00;font-size:9px;font-weight:bold">42</div>
</div>
<div class="a" style="left:0;top:1062px;width:1920px;height:1px;background:#808080"></div>
<div class="a" style="left:0;top:1063px;width:1920px;height:1px;background:#fff"></div>
<div class="t" style="left:5px;top:1068px;letter-spacing:-0.1px">Segítségért nyomja meg az F1 billentyűt</div>
<div class="a" style="left:1203px;top:1067px;width:1px;height:13px;background:#808080"></div>
<div class="a" style="left:1204px;top:1067px;width:1px;height:13px;background:#fff"></div>
<div class="a" style="left:1312px;top:1067px;width:1px;height:13px;background:#808080"></div>
<div class="a" style="left:1313px;top:1067px;width:1px;height:13px;background:#fff"></div>
<div class="a" style="left:1413px;top:1067px;width:1px;height:13px;background:#808080"></div>
<div class="a" style="left:1414px;top:1067px;width:1px;height:13px;background:#fff"></div>
<div class="a" style="left:1486px;top:1067px;width:1px;height:13px;background:#808080"></div>
<div class="a" style="left:1487px;top:1067px;width:1px;height:13px;background:#fff"></div>
<div class="a" style="left:1556px;top:1067px;width:1px;height:13px;background:#808080"></div>
<div class="a" style="left:1557px;top:1067px;width:1px;height:13px;background:#fff"></div>
<div class="a" style="left:1626px;top:1067px;width:1px;height:13px;background:#808080"></div>
<div class="a" style="left:1627px;top:1067px;width:1px;height:13px;background:#fff"></div>
<div class="a" style="left:1697px;top:1067px;width:1px;height:13px;background:#808080"></div>
<div class="a" style="left:1698px;top:1067px;width:1px;height:13px;background:#fff"></div>
<div class="a" style="left:1763px;top:1067px;width:1px;height:13px;background:#808080"></div>
<div class="a" style="left:1764px;top:1067px;width:1px;height:13px;background:#fff"></div>
<div class="t" style="left:1208px;top:1068px">Default</div>
<div class="t" style="left:1819px;top:1068px">655/2 kb</div>
<svg class="a" style="left:1768px;top:1069px" width="24" height="11" viewBox="0 0 24 11" shape-rendering="crispEdges"><rect x="0" y="0" width="2" height="11" fill="#6a8c08"/><rect x="0" y="10.4" width="2" height="0.6" fill="#083c5e"/><rect x="3" y="0" width="2" height="11" fill="#6a8c08"/><rect x="3" y="9.3" width="2" height="1.6" fill="#083c5e"/><rect x="6" y="0" width="2" height="11" fill="#6a8c08"/><rect x="6" y="8.3" width="2" height="2.7" fill="#083c5e"/><rect x="9" y="0" width="2" height="11" fill="#6a8c08"/><rect x="9" y="7.2" width="2" height="3.8" fill="#083c5e"/><rect x="12" y="0" width="2" height="11" fill="#6a8c08"/><rect x="12" y="6.2" width="2" height="4.8" fill="#083c5e"/><rect x="15" y="0" width="2" height="11" fill="#6a8c08"/><rect x="15" y="5.2" width="2" height="5.8" fill="#083c5e"/><rect x="18" y="0" width="2" height="11" fill="#6a8c08"/><rect x="18" y="4.1" width="2" height="6.9" fill="#083c5e"/><rect x="21" y="0" width="2" height="11" fill="#6a8c08"/><rect x="21" y="3.0" width="2" height="8.0" fill="#083c5e"/></svg>
<svg class="a" style="left:1911px;top:1071px" width="9" height="9" viewBox="3 3 9 9"><path d="M12 1L1 12M12 5L5 12M12 9L9 12" stroke="#808080"/><path d="M12 2L2 12M12 6L6 12M12 10L10 12" stroke="#fff"/></svg>
</div></body></html>
